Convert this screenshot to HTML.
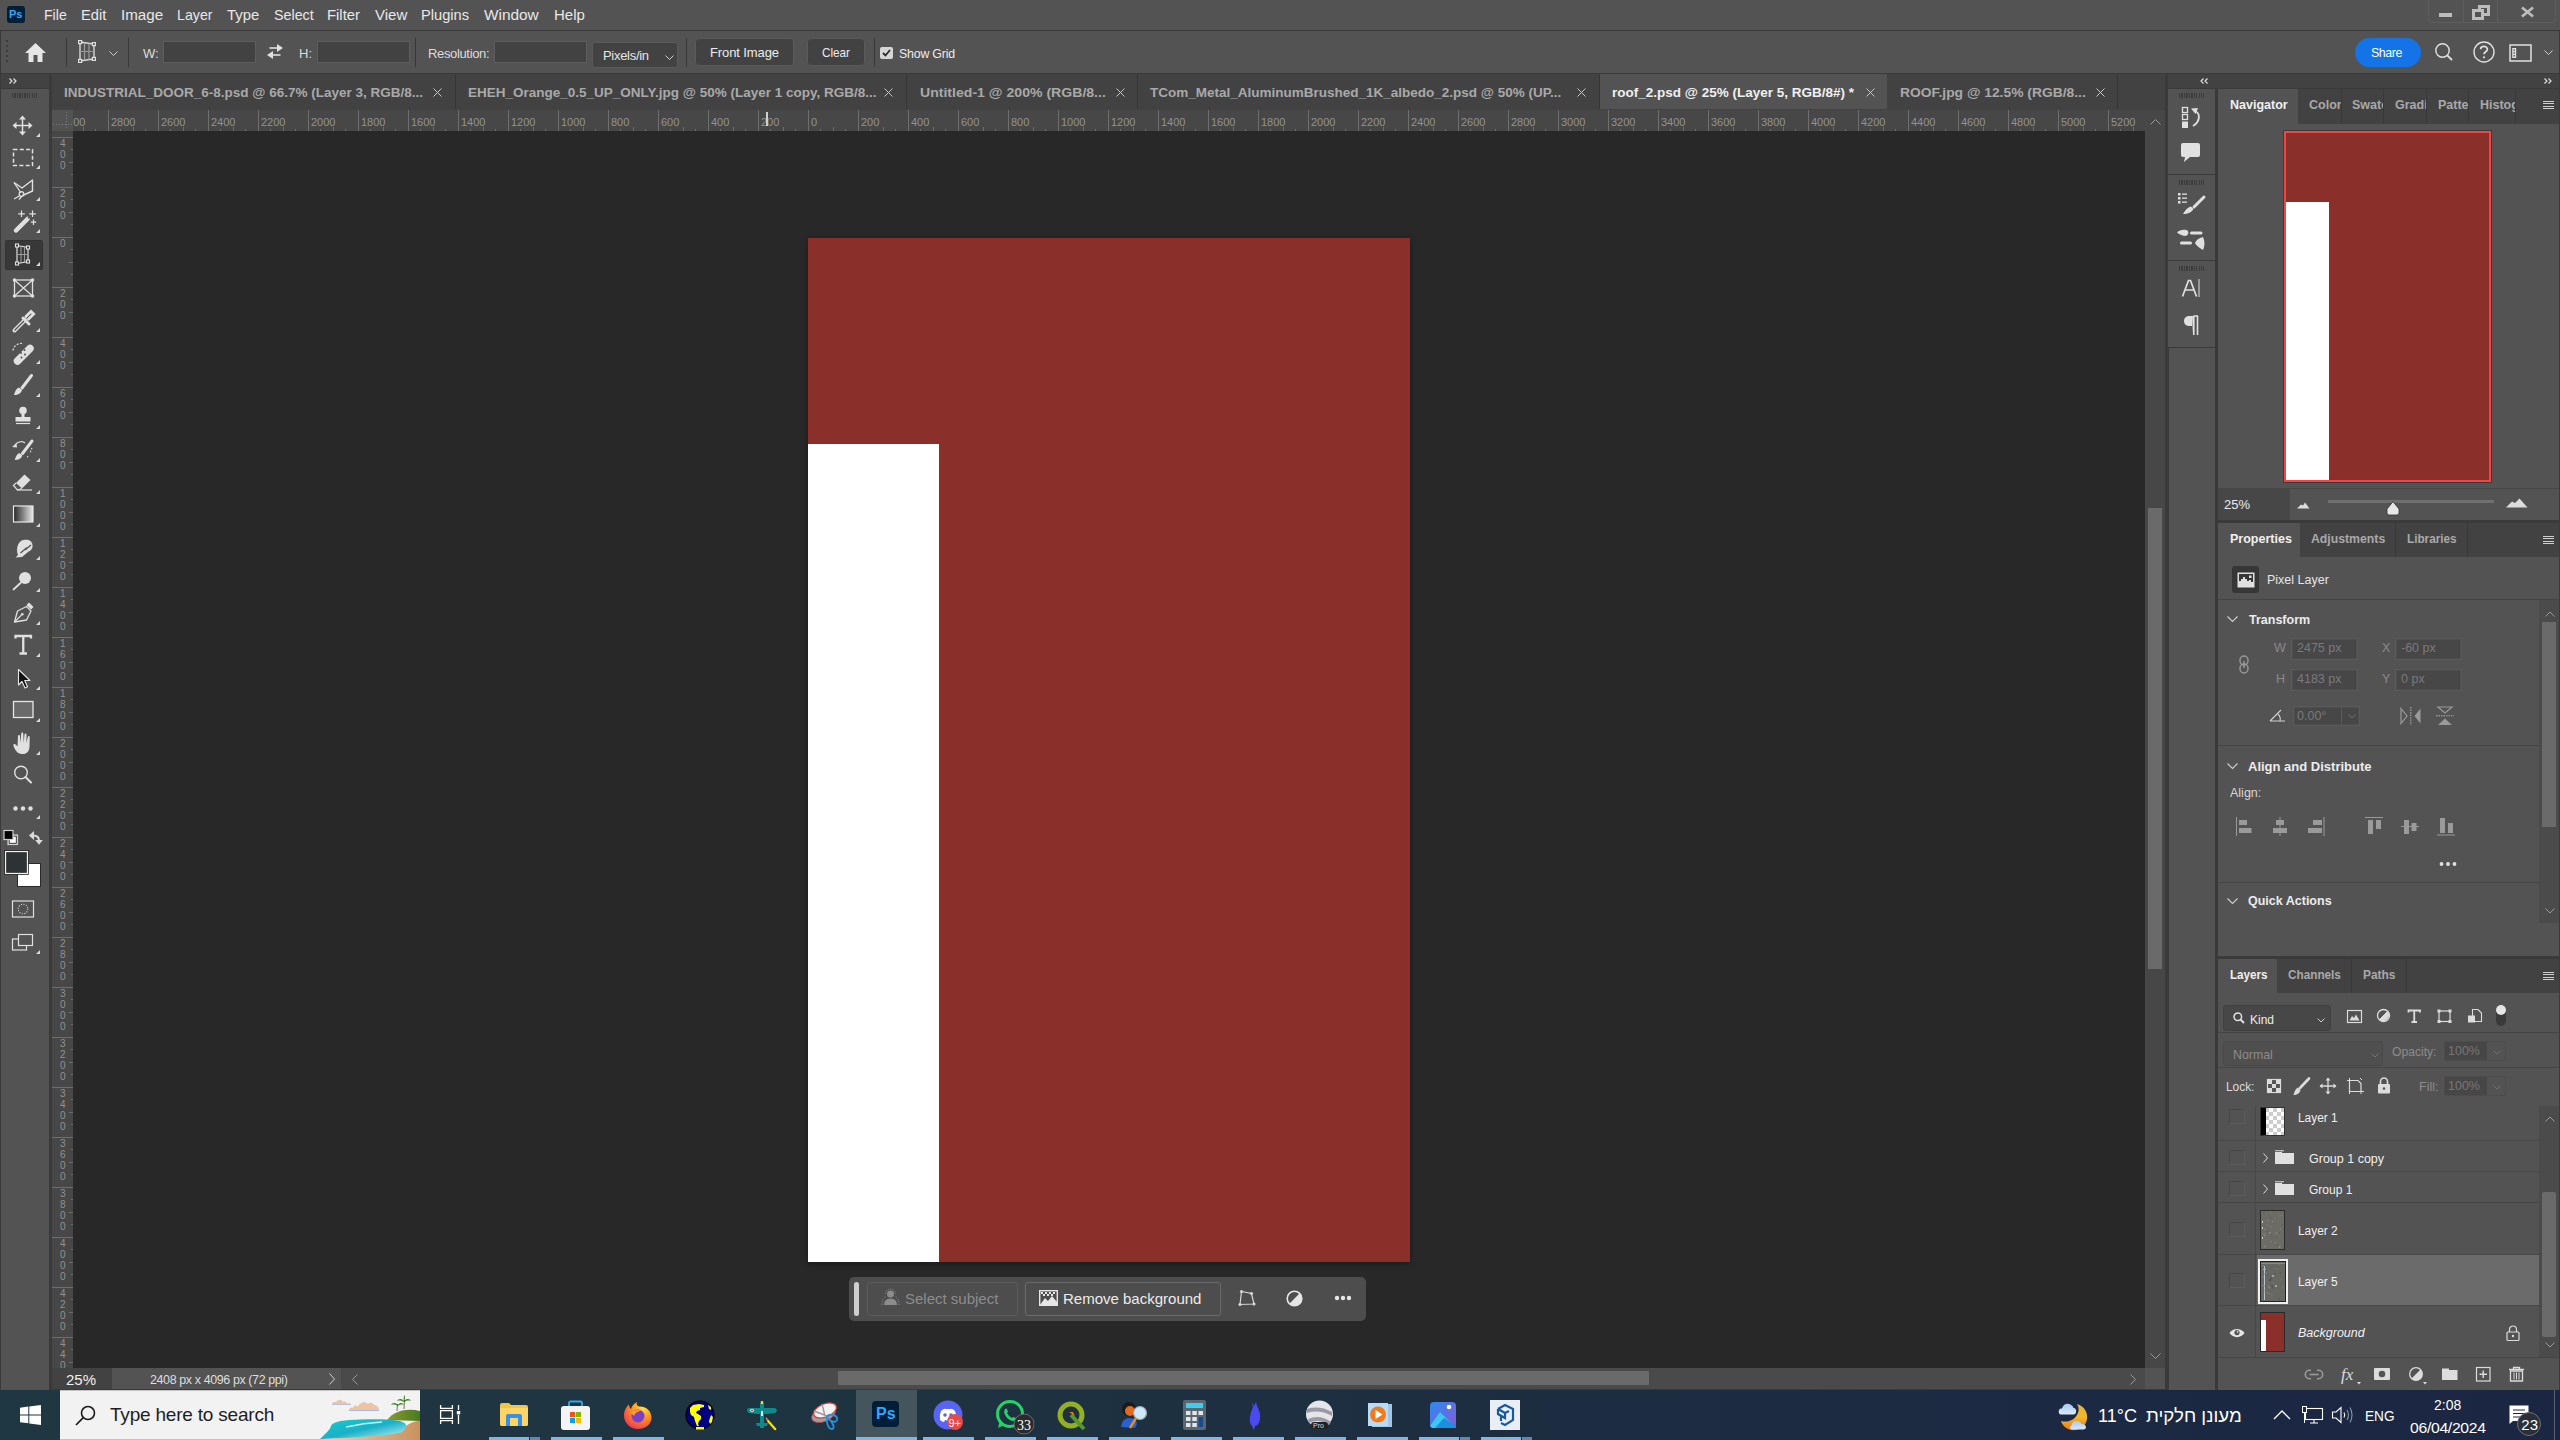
<!DOCTYPE html>
<html><head><meta charset="utf-8"><style>
*{margin:0;padding:0;box-sizing:border-box}
html,body{width:2560px;height:1440px;overflow:hidden;background:#282828;font-family:"Liberation Sans",sans-serif;color:#e6e6e6}
.a{position:absolute}
.t{position:absolute;white-space:nowrap;line-height:1}
svg{position:absolute;overflow:visible}
.tab{top:86px;font-size:13.5px;font-weight:bold;color:#a9a9a9}
.tx{top:87.5px;width:9px;height:9px}
.tx path{stroke:#c8c8c8;stroke-width:1;fill:none}
.rl{position:absolute;font-size:11px;line-height:1;color:#a8a8a8;white-space:nowrap}
.rl{color:#929292}
.rlv{position:absolute;left:8px;font-size:10px;line-height:1;color:#929292}
.grip{width:25px;height:5px;background:repeating-linear-gradient(90deg,#3c3c3c 0 1.3px,transparent 1.3px 2.45px)}
.psep{width:1px;height:35px;background:#383838}
.ptab{font-size:12.5px;font-weight:bold;color:#a9a9a9}
.ptab.act{color:#f0f0f0}
.pmenu{width:11px;height:8px;background:repeating-linear-gradient(#d0d0d0 0 1px,transparent 1px 2.33px)}
.chev path{fill:none;stroke:#cfcfcf;stroke-width:1.1}
.phead{font-size:12.5px;font-weight:bold;color:#ececec}
.plbl{font-size:12.5px;color:#8a8a8a}
.pval{font-size:12.5px;color:#7a7a7a}
.pfield{border:1px solid #5a5a5a;background:#474747;box-shadow:inset 0 0 0 1px #4d4d4d}
.lrow{left:0;width:321px;height:1px;background:#474747}
.ebox{width:16px;height:15px;border:1px solid #474747;border-right-color:#5c5c5c;border-bottom-color:#5c5c5c}
.lname{font-size:12.5px;color:#f0f0f0}
.ul{position:absolute;top:1437px;height:3px;background:#76b9ed}

</style></head><body>
<div class="a" style="left:0;top:0;width:2560px;height:30px;background:#535353"></div>
<div class="a" style="left:0;top:30px;width:2560px;height:1px;background:#393939"></div>
<div class="a" style="left:7px;top:6px;width:18px;height:17px;background:#001e36;border-radius:3px"></div>
<div class="t" style="left:9px;top:9px;font-size:11px;font-weight:bold;color:#31a8ff">Ps</div>
<div class="t" style="left:44px;top:7px;font-size:15px;color:#e8e8e8;transform:scaleX(0.94);transform-origin:left">File</div>
<div class="t" style="left:81px;top:7px;font-size:15px;color:#e8e8e8;transform:scaleX(0.976);transform-origin:left">Edit</div>
<div class="t" style="left:121px;top:7px;font-size:15px;color:#e8e8e8;transform:scaleX(1.01);transform-origin:left">Image</div>
<div class="t" style="left:177px;top:7px;font-size:15px;color:#e8e8e8;transform:scaleX(0.947);transform-origin:left">Layer</div>
<div class="t" style="left:227px;top:7px;font-size:15px;color:#e8e8e8;transform:scaleX(0.99);transform-origin:left">Type</div>
<div class="t" style="left:274px;top:7px;font-size:15px;color:#e8e8e8;transform:scaleX(0.953);transform-origin:left">Select</div>
<div class="t" style="left:327px;top:7px;font-size:15px;color:#e8e8e8;transform:scaleX(0.99);transform-origin:left">Filter</div>
<div class="t" style="left:375px;top:7px;font-size:15px;color:#e8e8e8">View</div>
<div class="t" style="left:421px;top:7px;font-size:15px;color:#e8e8e8;transform:scaleX(0.976);transform-origin:left">Plugins</div>
<div class="t" style="left:484px;top:7px;font-size:15px;color:#e8e8e8;transform:scaleX(1.026);transform-origin:left">Window</div>
<div class="t" style="left:554px;top:7px;font-size:15px;color:#e8e8e8">Help</div>
<!-- window controls -->
<div class="a" style="left:2428px;top:-4px;width:128px;height:27px;border:1px solid #5e5e5e;border-radius:0 0 4px 4px"></div>
<div class="a" style="left:2463px;top:0;width:1px;height:23px;background:#5e5e5e"></div>
<div class="a" style="left:2497px;top:0;width:1px;height:23px;background:#5e5e5e"></div>
<div class="a" style="left:2439px;top:13px;width:13px;height:4px;background:#bdbdbd"></div>
<div class="a" style="left:2478px;top:5px;width:12px;height:11px;border:3px solid #bdbdbd"></div>
<div class="a" style="left:2472px;top:9px;width:12px;height:11px;border:3px solid #bdbdbd;background:#535353"></div>
<svg style="left:2521px;top:7px" width="13" height="10" viewBox="0 0 13 10"><path d="M1 0.5 L12 9.5 M12 0.5 L1 9.5" stroke="#bdbdbd" stroke-width="2.8"/></svg>

<div class="a" style="left:0;top:31px;width:2560px;height:42px;background:#535353;border-left:1px solid #3a3a3a;border-right:1px solid #3a3a3a"></div>
<!-- grip -->
<div class="a" style="left:6px;top:40px;width:2px;height:24px;background:repeating-linear-gradient(#3c3c3c 0 2px,transparent 2px 5px)"></div>
<!-- home -->
<svg style="left:25px;top:43px" width="22" height="20" viewBox="0 0 22 20"><path d="M10.5 0 L21 10 L17.5 10 L17.5 19 L12.5 19 L12.5 12 L8.5 12 L8.5 19 L3.5 19 L3.5 10 L0 10 Z" fill="#e6e6e6"/></svg>
<div class="a" style="left:66px;top:38px;width:1px;height:29px;background:#383838"></div>
<!-- perspective crop tool icon -->
<svg style="left:78px;top:40px" width="18" height="23" viewBox="0 0 18 23"><path d="M2 2 L16 4 L16 19 L2 21 Z" fill="none" stroke="#e0e0e0" stroke-width="1.3"/><path d="M6.5 3 V20 M11 3.5 V19.5 M2 11.5 H16" stroke="#9a9a9a" stroke-width="1.2"/><g fill="#535353" stroke="#e0e0e0" stroke-width="1.2"><rect x="0.6" y="0.6" width="3" height="3"/><rect x="14.4" y="2.6" width="3" height="3"/><rect x="14.4" y="17.4" width="3" height="3"/><rect x="0.6" y="19.4" width="3" height="3"/></g></svg>
<svg style="left:109px;top:51px" width="9" height="5" viewBox="0 0 9 5"><path d="M0.5 0.5 L4.5 4.5 L8.5 0.5" fill="none" stroke="#d0d0d0" stroke-width="1"/></svg>
<div class="a" style="left:128px;top:38px;width:1px;height:29px;background:#383838"></div>
<div class="t" style="left:143px;top:47px;font-size:13px;color:#dcdcdc">W:</div>
<div class="a" style="left:163px;top:41px;width:93px;height:22px;background:#424242;border:1px solid #5e5e5e"></div>
<svg style="left:266px;top:44px" width="18" height="16" viewBox="0 0 18 16"><path d="M3.5 4 H13" stroke="#e0e0e0" stroke-width="1.6"/><path d="M11 0 L17 4 L11 8 Z" fill="#e0e0e0"/><path d="M14.5 11 H5" stroke="#e0e0e0" stroke-width="1.6"/><path d="M7 7 L1 11 L7 15 Z" fill="#e0e0e0"/></svg>
<div class="t" style="left:299px;top:47px;font-size:13px;color:#dcdcdc">H:</div>
<div class="a" style="left:317px;top:41px;width:93px;height:22px;background:#424242;border:1px solid #5e5e5e"></div>
<div class="a" style="left:415px;top:38px;width:1px;height:29px;background:#383838"></div>
<div class="t" style="left:428px;top:47px;font-size:13px;color:#dcdcdc;letter-spacing:-0.35px">Resolution:</div>
<div class="a" style="left:494px;top:41px;width:93px;height:22px;background:#424242;border:1px solid #5e5e5e"></div>
<div class="a" style="left:592px;top:42px;width:86px;height:26px;background:#424242;border:1px solid #5a5a5a;border-radius:3px"></div>
<div class="t" style="left:603px;top:49px;font-size:13px;color:#e6e6e6;letter-spacing:-0.3px">Pixels/in</div>
<svg style="left:665px;top:55px" width="9" height="5" viewBox="0 0 9 5"><path d="M0.5 0.5 L4.5 4.5 L8.5 0.5" fill="none" stroke="#d0d0d0" stroke-width="1"/></svg>
<div class="a" style="left:686px;top:38px;width:1px;height:29px;background:#383838"></div>
<div class="a" style="left:695px;top:38px;width:99px;height:28px;background:#424242;border:1px solid #5a5a5a;border-radius:4px"></div>
<div class="t" style="left:710px;top:46px;font-size:13px;color:#ececec;letter-spacing:-0.1px">Front Image</div>
<div class="a" style="left:807px;top:38px;width:58px;height:28px;background:#424242;border:1px solid #5a5a5a;border-radius:4px"></div>
<div class="t" style="left:822px;top:46px;font-size:13px;color:#ececec;transform:scaleX(0.9);transform-origin:left">Clear</div>
<div class="a" style="left:874px;top:38px;width:1px;height:29px;background:#383838"></div>
<div class="a" style="left:880px;top:47px;width:13px;height:12px;background:#d6d6d6;border-radius:2px"></div>
<svg style="left:882px;top:49px" width="9" height="8" viewBox="0 0 9 8"><path d="M1 4 L3.5 6.5 L8 1" fill="none" stroke="#2a2a2a" stroke-width="1.8"/></svg>
<div class="t" style="left:899px;top:47px;font-size:13px;color:#ececec;letter-spacing:-0.2px;transform:scaleX(0.95);transform-origin:left">Show Grid</div>
<!-- right side -->
<div class="a" style="left:2355px;top:38px;width:66px;height:29px;background:#1473e6;border-radius:15px"></div>
<div class="t" style="left:2371px;top:46px;font-size:13.5px;color:#ffffff;letter-spacing:-0.5px;transform:scaleX(0.92);transform-origin:left">Share</div>
<svg style="left:2435px;top:43px" width="18" height="19" viewBox="0 0 18 19"><circle cx="7.5" cy="7.5" r="6.7" fill="none" stroke="#e0e0e0" stroke-width="1.4"/><path d="M12.3 12.3 L17 17" stroke="#e0e0e0" stroke-width="1.8"/></svg>
<svg style="left:2473px;top:41px" width="22" height="22" viewBox="0 0 22 22"><circle cx="11" cy="11" r="10" fill="none" stroke="#e0e0e0" stroke-width="1.4"/><path d="M7.6 8.3 C7.6 4.5 14.4 4.5 14.4 8.3 C14.4 10.8 11 10.8 11 13.3" fill="none" stroke="#e0e0e0" stroke-width="1.7"/><circle cx="11" cy="16.3" r="1.1" fill="#e0e0e0"/></svg>
<svg style="left:2509px;top:44px" width="23" height="18" viewBox="0 0 23 18"><rect x="1" y="1" width="21" height="16" fill="none" stroke="#e0e0e0" stroke-width="1.5"/><rect x="3.2" y="4" width="4" height="10" fill="#e0e0e0"/><g fill="#535353"><rect x="4.5" y="5.5" width="1.4" height="1.4"/><rect x="4.5" y="8.3" width="1.4" height="1.4"/><rect x="4.5" y="11.1" width="1.4" height="1.4"/></g></svg>
<svg style="left:2544px;top:50px" width="9" height="5" viewBox="0 0 9 5"><path d="M0.5 0.5 L4.5 4.5 L8.5 0.5" fill="none" stroke="#d0d0d0" stroke-width="1"/></svg>

<div class="a" style="left:0;top:73px;width:2560px;height:1317px;background:#3a3a3a"></div>
<div class="a" style="left:52px;top:74px;width:2113px;height:36px;background:#424242"></div>
<div class="a" style="left:1600px;top:74px;width:287px;height:35px;background:#535353"></div>
<div class="a" style="left:455px;top:74px;width:1px;height:35px;background:#363636"></div>
<div class="a" style="left:906px;top:74px;width:1px;height:35px;background:#363636"></div>
<div class="a" style="left:1137px;top:74px;width:1px;height:35px;background:#363636"></div>
<div class="a" style="left:1599px;top:74px;width:1px;height:35px;background:#363636"></div>
<div class="a" style="left:2117px;top:74px;width:1px;height:35px;background:#363636"></div>
<div class="t tab" style="left:64px">INDUSTRIAL_DOOR_6-8.psd @ 66.7% (Layer 3, RGB/8...</div>
<div class="t tab" style="left:468px">EHEH_Orange_0.5_UP_ONLY.jpg @ 50% (Layer 1 copy, RGB/8...</div>
<div class="t tab" style="left:920px;transform:scaleX(1.043);transform-origin:left">Untitled-1 @ 200% (RGB/8...</div>
<div class="t tab" style="left:1150px">TCom_Metal_AluminumBrushed_1K_albedo_2.psd @ 50% (UP...</div>
<div class="t tab" style="left:1612px;color:#f0f0f0">roof_2.psd @ 25% (Layer 5, RGB/8#) *</div>
<div class="t tab" style="left:1900px;transform:scaleX(1.025);transform-origin:left">ROOF.jpg @ 12.5% (RGB/8...</div>
<svg class="tx" style="left:433.2px"><path d="M0.5 0.5 L8.5 8.5 M8.5 0.5 L0.5 8.5"/></svg>
<svg class="tx" style="left:884.3px"><path d="M0.5 0.5 L8.5 8.5 M8.5 0.5 L0.5 8.5"/></svg>
<svg class="tx" style="left:1115.5px"><path d="M0.5 0.5 L8.5 8.5 M8.5 0.5 L0.5 8.5"/></svg>
<svg class="tx" style="left:1576.5px"><path d="M0.5 0.5 L8.5 8.5 M8.5 0.5 L0.5 8.5"/></svg>
<svg class="tx" style="left:1865.5px"><path d="M0.5 0.5 L8.5 8.5 M8.5 0.5 L0.5 8.5"/></svg>
<svg class="tx" style="left:2095.5px"><path d="M0.5 0.5 L8.5 8.5 M8.5 0.5 L0.5 8.5"/></svg>

<div class="a" style="left:52px;top:110px;width:2093px;height:21px;background:#474747"></div>
<div class="a" style="left:52px;top:110px;width:21px;height:21px;background:#535353"></div>
<div class="a" style="left:52px;top:131px;width:21px;height:1237px;background:#474747"></div>
<div class="a" style="left:73px;top:110px;width:2072px;height:21px;overflow:hidden">
<svg style="left:0;top:0" width="2072" height="21" viewBox="0 0 2072 21"><path d="M10.5 17 V21 M22.5 19 V21 M35.5 0 V21 M47.5 19 V21 M60.5 17 V21 M72.5 19 V21 M85.5 0 V21 M97.5 19 V21 M110.5 17 V21 M122.5 19 V21 M135.5 0 V21 M147.5 19 V21 M160.5 17 V21 M172.5 19 V21 M185.5 0 V21 M197.5 19 V21 M210.5 17 V21 M222.5 19 V21 M235.5 0 V21 M247.5 19 V21 M260.5 17 V21 M272.5 19 V21 M285.5 0 V21 M297.5 19 V21 M310.5 17 V21 M322.5 19 V21 M335.5 0 V21 M347.5 19 V21 M360.5 17 V21 M372.5 19 V21 M385.5 0 V21 M397.5 19 V21 M410.5 17 V21 M422.5 19 V21 M435.5 0 V21 M447.5 19 V21 M460.5 17 V21 M472.5 19 V21 M485.5 0 V21 M497.5 19 V21 M510.5 17 V21 M522.5 19 V21 M535.5 0 V21 M547.5 19 V21 M560.5 17 V21 M572.5 19 V21 M585.5 0 V21 M597.5 19 V21 M610.5 17 V21 M622.5 19 V21 M635.5 0 V21 M647.5 19 V21 M660.5 17 V21 M672.5 19 V21 M685.5 0 V21 M697.5 19 V21 M710.5 17 V21 M722.5 19 V21 M735.5 0 V21 M747.5 19 V21 M760.5 17 V21 M772.5 19 V21 M785.5 0 V21 M797.5 19 V21 M810.5 17 V21 M822.5 19 V21 M835.5 0 V21 M847.5 19 V21 M860.5 17 V21 M872.5 19 V21 M885.5 0 V21 M897.5 19 V21 M910.5 17 V21 M922.5 19 V21 M935.5 0 V21 M947.5 19 V21 M960.5 17 V21 M972.5 19 V21 M985.5 0 V21 M997.5 19 V21 M1010.5 17 V21 M1022.5 19 V21 M1035.5 0 V21 M1047.5 19 V21 M1060.5 17 V21 M1072.5 19 V21 M1085.5 0 V21 M1097.5 19 V21 M1110.5 17 V21 M1122.5 19 V21 M1135.5 0 V21 M1147.5 19 V21 M1160.5 17 V21 M1172.5 19 V21 M1185.5 0 V21 M1197.5 19 V21 M1210.5 17 V21 M1222.5 19 V21 M1235.5 0 V21 M1247.5 19 V21 M1260.5 17 V21 M1272.5 19 V21 M1285.5 0 V21 M1297.5 19 V21 M1310.5 17 V21 M1322.5 19 V21 M1335.5 0 V21 M1347.5 19 V21 M1360.5 17 V21 M1372.5 19 V21 M1385.5 0 V21 M1397.5 19 V21 M1410.5 17 V21 M1422.5 19 V21 M1435.5 0 V21 M1447.5 19 V21 M1460.5 17 V21 M1472.5 19 V21 M1485.5 0 V21 M1497.5 19 V21 M1510.5 17 V21 M1522.5 19 V21 M1535.5 0 V21 M1547.5 19 V21 M1560.5 17 V21 M1572.5 19 V21 M1585.5 0 V21 M1597.5 19 V21 M1610.5 17 V21 M1622.5 19 V21 M1635.5 0 V21 M1647.5 19 V21 M1660.5 17 V21 M1672.5 19 V21 M1685.5 0 V21 M1697.5 19 V21 M1710.5 17 V21 M1722.5 19 V21 M1735.5 0 V21 M1747.5 19 V21 M1760.5 17 V21 M1772.5 19 V21 M1785.5 0 V21 M1797.5 19 V21 M1810.5 17 V21 M1822.5 19 V21 M1835.5 0 V21 M1847.5 19 V21 M1860.5 17 V21 M1872.5 19 V21 M1885.5 0 V21 M1897.5 19 V21 M1910.5 17 V21 M1922.5 19 V21 M1935.5 0 V21 M1947.5 19 V21 M1960.5 17 V21 M1972.5 19 V21 M1985.5 0 V21 M1997.5 19 V21 M2010.5 17 V21 M2022.5 19 V21 M2035.5 0 V21 M2047.5 19 V21 M2060.5 17 V21" stroke="#6e6e6e" stroke-width="1" fill="none"/></svg>
<div class="rl" style="left:-12px;top:7px">3000</div>
<div class="rl" style="left:38px;top:7px">2800</div>
<div class="rl" style="left:88px;top:7px">2600</div>
<div class="rl" style="left:138px;top:7px">2400</div>
<div class="rl" style="left:188px;top:7px">2200</div>
<div class="rl" style="left:238px;top:7px">2000</div>
<div class="rl" style="left:288px;top:7px">1800</div>
<div class="rl" style="left:338px;top:7px">1600</div>
<div class="rl" style="left:388px;top:7px">1400</div>
<div class="rl" style="left:438px;top:7px">1200</div>
<div class="rl" style="left:488px;top:7px">1000</div>
<div class="rl" style="left:538px;top:7px">800</div>
<div class="rl" style="left:588px;top:7px">600</div>
<div class="rl" style="left:638px;top:7px">400</div>
<div class="rl" style="left:688px;top:7px">200</div>
<div class="rl" style="left:738px;top:7px">0</div>
<div class="rl" style="left:788px;top:7px">200</div>
<div class="rl" style="left:838px;top:7px">400</div>
<div class="rl" style="left:888px;top:7px">600</div>
<div class="rl" style="left:938px;top:7px">800</div>
<div class="rl" style="left:988px;top:7px">1000</div>
<div class="rl" style="left:1038px;top:7px">1200</div>
<div class="rl" style="left:1088px;top:7px">1400</div>
<div class="rl" style="left:1138px;top:7px">1600</div>
<div class="rl" style="left:1188px;top:7px">1800</div>
<div class="rl" style="left:1238px;top:7px">2000</div>
<div class="rl" style="left:1288px;top:7px">2200</div>
<div class="rl" style="left:1338px;top:7px">2400</div>
<div class="rl" style="left:1388px;top:7px">2600</div>
<div class="rl" style="left:1438px;top:7px">2800</div>
<div class="rl" style="left:1488px;top:7px">3000</div>
<div class="rl" style="left:1538px;top:7px">3200</div>
<div class="rl" style="left:1588px;top:7px">3400</div>
<div class="rl" style="left:1638px;top:7px">3600</div>
<div class="rl" style="left:1688px;top:7px">3800</div>
<div class="rl" style="left:1738px;top:7px">4000</div>
<div class="rl" style="left:1788px;top:7px">4200</div>
<div class="rl" style="left:1838px;top:7px">4400</div>
<div class="rl" style="left:1888px;top:7px">4600</div>
<div class="rl" style="left:1938px;top:7px">4800</div>
<div class="rl" style="left:1988px;top:7px">5000</div>
<div class="rl" style="left:2038px;top:7px">5200</div>
</div>
<div class="a" style="left:52px;top:131px;width:21px;height:1237px;overflow:hidden">
<svg style="left:0;top:0" width="21" height="1237" viewBox="0 0 21 1237"><path d="M0 6.5 H21 M19 18.5 H21 M17 31.5 H21 M19 43.5 H21 M0 56.5 H21 M19 68.5 H21 M17 81.5 H21 M19 93.5 H21 M0 106.5 H21 M19 118.5 H21 M17 131.5 H21 M19 143.5 H21 M0 156.5 H21 M19 168.5 H21 M17 181.5 H21 M19 193.5 H21 M0 206.5 H21 M19 218.5 H21 M17 231.5 H21 M19 243.5 H21 M0 256.5 H21 M19 268.5 H21 M17 281.5 H21 M19 293.5 H21 M0 306.5 H21 M19 318.5 H21 M17 331.5 H21 M19 343.5 H21 M0 356.5 H21 M19 368.5 H21 M17 381.5 H21 M19 393.5 H21 M0 406.5 H21 M19 418.5 H21 M17 431.5 H21 M19 443.5 H21 M0 456.5 H21 M19 468.5 H21 M17 481.5 H21 M19 493.5 H21 M0 506.5 H21 M19 518.5 H21 M17 531.5 H21 M19 543.5 H21 M0 556.5 H21 M19 568.5 H21 M17 581.5 H21 M19 593.5 H21 M0 606.5 H21 M19 618.5 H21 M17 631.5 H21 M19 643.5 H21 M0 656.5 H21 M19 668.5 H21 M17 681.5 H21 M19 693.5 H21 M0 706.5 H21 M19 718.5 H21 M17 731.5 H21 M19 743.5 H21 M0 756.5 H21 M19 768.5 H21 M17 781.5 H21 M19 793.5 H21 M0 806.5 H21 M19 818.5 H21 M17 831.5 H21 M19 843.5 H21 M0 856.5 H21 M19 868.5 H21 M17 881.5 H21 M19 893.5 H21 M0 906.5 H21 M19 918.5 H21 M17 931.5 H21 M19 943.5 H21 M0 956.5 H21 M19 968.5 H21 M17 981.5 H21 M19 993.5 H21 M0 1006.5 H21 M19 1018.5 H21 M17 1031.5 H21 M19 1043.5 H21 M0 1056.5 H21 M19 1068.5 H21 M17 1081.5 H21 M19 1093.5 H21 M0 1106.5 H21 M19 1118.5 H21 M17 1131.5 H21 M19 1143.5 H21 M0 1156.5 H21 M19 1168.5 H21 M17 1181.5 H21 M19 1193.5 H21 M0 1206.5 H21 M19 1218.5 H21 M17 1231.5 H21" stroke="#6e6e6e" stroke-width="1" fill="none"/></svg>
<div class="rlv" style="top:8px">4</div>
<div class="rlv" style="top:19px">0</div>
<div class="rlv" style="top:30px">0</div>
<div class="rlv" style="top:58px">2</div>
<div class="rlv" style="top:69px">0</div>
<div class="rlv" style="top:80px">0</div>
<div class="rlv" style="top:108px">0</div>
<div class="rlv" style="top:158px">2</div>
<div class="rlv" style="top:169px">0</div>
<div class="rlv" style="top:180px">0</div>
<div class="rlv" style="top:208px">4</div>
<div class="rlv" style="top:219px">0</div>
<div class="rlv" style="top:230px">0</div>
<div class="rlv" style="top:258px">6</div>
<div class="rlv" style="top:269px">0</div>
<div class="rlv" style="top:280px">0</div>
<div class="rlv" style="top:308px">8</div>
<div class="rlv" style="top:319px">0</div>
<div class="rlv" style="top:330px">0</div>
<div class="rlv" style="top:358px">1</div>
<div class="rlv" style="top:369px">0</div>
<div class="rlv" style="top:380px">0</div>
<div class="rlv" style="top:391px">0</div>
<div class="rlv" style="top:408px">1</div>
<div class="rlv" style="top:419px">2</div>
<div class="rlv" style="top:430px">0</div>
<div class="rlv" style="top:441px">0</div>
<div class="rlv" style="top:458px">1</div>
<div class="rlv" style="top:469px">4</div>
<div class="rlv" style="top:480px">0</div>
<div class="rlv" style="top:491px">0</div>
<div class="rlv" style="top:508px">1</div>
<div class="rlv" style="top:519px">6</div>
<div class="rlv" style="top:530px">0</div>
<div class="rlv" style="top:541px">0</div>
<div class="rlv" style="top:558px">1</div>
<div class="rlv" style="top:569px">8</div>
<div class="rlv" style="top:580px">0</div>
<div class="rlv" style="top:591px">0</div>
<div class="rlv" style="top:608px">2</div>
<div class="rlv" style="top:619px">0</div>
<div class="rlv" style="top:630px">0</div>
<div class="rlv" style="top:641px">0</div>
<div class="rlv" style="top:658px">2</div>
<div class="rlv" style="top:669px">2</div>
<div class="rlv" style="top:680px">0</div>
<div class="rlv" style="top:691px">0</div>
<div class="rlv" style="top:708px">2</div>
<div class="rlv" style="top:719px">4</div>
<div class="rlv" style="top:730px">0</div>
<div class="rlv" style="top:741px">0</div>
<div class="rlv" style="top:758px">2</div>
<div class="rlv" style="top:769px">6</div>
<div class="rlv" style="top:780px">0</div>
<div class="rlv" style="top:791px">0</div>
<div class="rlv" style="top:808px">2</div>
<div class="rlv" style="top:819px">8</div>
<div class="rlv" style="top:830px">0</div>
<div class="rlv" style="top:841px">0</div>
<div class="rlv" style="top:858px">3</div>
<div class="rlv" style="top:869px">0</div>
<div class="rlv" style="top:880px">0</div>
<div class="rlv" style="top:891px">0</div>
<div class="rlv" style="top:908px">3</div>
<div class="rlv" style="top:919px">2</div>
<div class="rlv" style="top:930px">0</div>
<div class="rlv" style="top:941px">0</div>
<div class="rlv" style="top:958px">3</div>
<div class="rlv" style="top:969px">4</div>
<div class="rlv" style="top:980px">0</div>
<div class="rlv" style="top:991px">0</div>
<div class="rlv" style="top:1008px">3</div>
<div class="rlv" style="top:1019px">6</div>
<div class="rlv" style="top:1030px">0</div>
<div class="rlv" style="top:1041px">0</div>
<div class="rlv" style="top:1058px">3</div>
<div class="rlv" style="top:1069px">8</div>
<div class="rlv" style="top:1080px">0</div>
<div class="rlv" style="top:1091px">0</div>
<div class="rlv" style="top:1108px">4</div>
<div class="rlv" style="top:1119px">0</div>
<div class="rlv" style="top:1130px">0</div>
<div class="rlv" style="top:1141px">0</div>
<div class="rlv" style="top:1158px">4</div>
<div class="rlv" style="top:1169px">2</div>
<div class="rlv" style="top:1180px">0</div>
<div class="rlv" style="top:1191px">0</div>
<div class="rlv" style="top:1208px">4</div>
<div class="rlv" style="top:1219px">4</div>
<div class="rlv" style="top:1230px">0</div>
</div>
<div class="a" style="left:53px;top:124px;width:19px;height:1px;background:repeating-linear-gradient(90deg,#7a7a7a 0 1px,transparent 1px 3px)"></div>
<div class="a" style="left:66px;top:112px;width:1px;height:17px;background:repeating-linear-gradient(#7a7a7a 0 1px,transparent 1px 3px)"></div>
<div class="a" style="left:766px;top:112px;width:2px;height:14px;background:#d0d0d0"></div>
<!-- canvas -->
<div class="a" style="left:73px;top:131px;width:2072px;height:1237px;background:#282828"></div>
<div class="a" style="left:808px;top:238px;width:602px;height:1024px;background:#8b2f2a;box-shadow:0 2px 6px rgba(0,0,0,0.35)"></div>
<div class="a" style="left:808px;top:444px;width:131px;height:818px;background:#ffffff"></div>
<!-- v scrollbar -->
<div class="a" style="left:2145px;top:110px;width:20px;height:1258px;background:#474747"></div>
<div class="a" style="left:2148px;top:508px;width:14px;height:461px;background:#6a6a6a"></div>
<svg style="left:2150px;top:119px" width="11" height="6" viewBox="0 0 11 6"><path d="M0.5 5.5 L5.5 0.5 L10.5 5.5" fill="none" stroke="#9a9a9a" stroke-width="1"/></svg>
<svg style="left:2150px;top:1353px" width="11" height="6" viewBox="0 0 11 6"><path d="M0.5 0.5 L5.5 5.5 L10.5 0.5" fill="none" stroke="#9a9a9a" stroke-width="1"/></svg>
<!-- contextual task bar -->
<div class="a" style="left:849px;top:1277px;width:517px;height:44px;background:#4d4d4d;border-radius:5px"></div>
<div class="a" style="left:854px;top:1282px;width:5px;height:34px;background:#cfcfcf;border-radius:3px"></div>
<div class="a" style="left:867px;top:1282px;width:151px;height:34px;border:1px solid #5c5c5c;border-radius:3px"></div>
<div class="a" style="left:1025px;top:1282px;width:196px;height:34px;border:1px solid #6a6a6a;border-radius:3px"></div>
<div class="t" style="left:905px;top:1291px;font-size:15px;color:#8c8c8c">Select subject</div>
<div class="t" style="left:1063px;top:1291px;font-size:15px;color:#ececec">Remove background</div>
<svg style="left:881px;top:1289px" width="19" height="17" viewBox="0 0 19 17"><circle cx="9.5" cy="5" r="3.5" fill="#8c8c8c"/><path d="M3 16 Q3 9.5 9.5 9.5 Q16 9.5 16 16Z" fill="#8c8c8c"/><path d="M4.5 5 A5 5 0 0 1 14.5 5 M1 16 Q1 9 5 7.5 M18 16 Q18 9 14 7.5" fill="none" stroke="#8c8c8c" stroke-width="1" stroke-dasharray="1.2 1.2"/></svg>
<svg style="left:1039px;top:1290px" width="19" height="16" viewBox="0 0 19 16"><rect x="0.7" y="0.7" width="17.6" height="14.6" fill="none" stroke="#e6e6e6" stroke-width="1.4"/><path d="M1 15 L6 8 L9 11 L13 6 L18 12 V15Z" fill="#e6e6e6"/><g fill="#e6e6e6"><rect x="2" y="2" width="2" height="2"/><rect x="6" y="2" width="2" height="2"/><rect x="10" y="2" width="2" height="2"/><rect x="14" y="2" width="2" height="2"/><rect x="4" y="4" width="2" height="2"/><rect x="8" y="4" width="2" height="2"/><rect x="12" y="4" width="2" height="2"/></g></svg>
<svg style="left:1238px;top:1289px" width="18" height="18" viewBox="0 0 18 18"><path d="M3.5 2.5 L13.5 4.5 L16 15 L2 15.5 Z" fill="none" stroke="#d6d6d6" stroke-width="1.2"/><g fill="#d6d6d6"><circle cx="3.5" cy="2.5" r="1.6"/><circle cx="13.5" cy="4.5" r="1.6"/><circle cx="16" cy="15" r="1.6"/><circle cx="2" cy="15.5" r="1.6"/></g></svg>
<svg style="left:1286px;top:1290px" width="17" height="17" viewBox="0 0 17 17"><circle cx="8.5" cy="8.5" r="7.3" fill="none" stroke="#e6e6e6" stroke-width="1.6"/><path d="M13.7 3.3 A7.3 7.3 0 0 1 3.3 13.7Z" fill="#e6e6e6"/></svg>
<svg style="left:1334px;top:1295px" width="18" height="6" viewBox="0 0 18 6" fill="#e6e6e6"><circle cx="3" cy="3" r="2.2"/><circle cx="9" cy="3" r="2.2"/><circle cx="15" cy="3" r="2.2"/></svg>

<div class="a" style="left:52px;top:1368px;width:2113px;height:21px;background:#4a4a4a"></div>
<div class="a" style="left:52px;top:1368px;width:60px;height:21px;background:#424242"></div>
<div class="a" style="left:112px;top:1368px;width:229px;height:21px;background:#535353"></div>
<div class="t" style="left:66px;top:1372px;font-size:15px;color:#f0f0f0">25%</div>
<div class="t" style="left:150px;top:1373px;font-size:13px;color:#dedede;letter-spacing:-0.4px;transform:scaleX(0.958);transform-origin:left">2408 px x 4096 px (72 ppi)</div>
<svg style="left:329px;top:1373px" width="6" height="12" viewBox="0 0 6 12"><path d="M0.5 0.5 L5.5 6 L0.5 11.5" fill="none" stroke="#cfcfcf" stroke-width="1"/></svg>
<svg style="left:352px;top:1374px" width="6" height="11" viewBox="0 0 6 11"><path d="M5.5 0.5 L0.5 5.5 L5.5 10.5" fill="none" stroke="#9a9a9a" stroke-width="1"/></svg>
<div class="a" style="left:838px;top:1371px;width:811px;height:14px;background:#6a6a6a;border-radius:1px"></div>
<svg style="left:2130px;top:1374px" width="6" height="11" viewBox="0 0 6 11"><path d="M0.5 0.5 L5.5 5.5 L0.5 10.5" fill="none" stroke="#9a9a9a" stroke-width="1"/></svg>
<div class="a" style="left:2145px;top:1368px;width:20px;height:21px;background:#535353"></div>

<!-- toolbar -->
<div class="a" style="left:1px;top:74px;width:48px;height:14px;background:#424242"></div>
<svg style="left:9px;top:78px" width="8" height="6" viewBox="0 0 8 6"><path d="M0.5 0.5 L3 3 L0.5 5.5 M4.5 0.5 L7 3 L4.5 5.5" fill="none" stroke="#e0e0e0" stroke-width="1.2"/></svg>
<div class="a" style="left:1px;top:89px;width:48px;height:1301px;background:#535353"></div>
<div class="a grip" style="left:12px;top:93px;width:25px"></div>
<div class="a" style="left:5px;top:240px;width:38px;height:30px;background:#383838;border:1px solid #333;border-radius:2px"></div>
<svg style="left:0;top:0" width="50" height="1000" viewBox="0 0 50 1000">
<g fill="#d8d8d8">
<path d="M36 137 L40 137 L40 133Z M36 169 L40 169 L40 165Z M36 201 L40 201 L40 197Z M36 233 L40 233 L40 229Z M36 266 L40 266 L40 262Z M36 332 L40 332 L40 328Z M36 364 L40 364 L40 360Z M36 397 L40 397 L40 393Z M36 429 L40 429 L40 425Z M36 462 L40 462 L40 458Z M36 494 L40 494 L40 490Z M36 527 L40 527 L40 523Z M36 560 L40 560 L40 556Z M36 592 L40 592 L40 588Z M36 625 L40 625 L40 621Z M36 657 L40 657 L40 653Z M36 690 L40 690 L40 686Z M36 722 L40 722 L40 718Z M36 755 L40 755 L40 751Z M36 819 L40 819 L40 815Z M36 954 L40 954 L40 950Z"/>
</g>
<g fill="none" stroke="#e0e0e0" stroke-width="1.5" stroke-linecap="round" stroke-linejoin="round">
<!-- move -->
<path d="M14.5 125.5 H30.5 M22.5 117.5 V133.5"/>
</g>
<g fill="#e0e0e0">
<path d="M22.5 115.5 L19 119.5 L26 119.5Z M22.5 135.5 L19 131.5 L26 131.5Z M12.5 125.5 L16.5 122 L16.5 129Z M32.5 125.5 L28.5 122 L28.5 129Z"/>
</g>
<!-- marquee -->
<rect x="13.5" y="149.5" width="19" height="16" fill="none" stroke="#e0e0e0" stroke-width="1.5" stroke-dasharray="4 2.3"/>
<!-- lasso -->
<path d="M14 182.5 L22 188 L32.5 180 L32.5 191 L22.5 195.5" fill="none" stroke="#e0e0e0" stroke-width="1.4" stroke-linejoin="round"/>
<path d="M14 182.5 L21 193 M14 199 L20 195.5 M19 199.5 L22 196" fill="none" stroke="#e0e0e0" stroke-width="1.3"/>
<circle cx="21.5" cy="194" r="2.3" fill="none" stroke="#e0e0e0" stroke-width="1.3"/>
<!-- magic wand -->
<path d="M16 230.5 L27.5 219" stroke="#e0e0e0" stroke-width="4.5" stroke-linecap="round"/>
<path d="M28 218.5 L29.5 217" stroke="#535353" stroke-width="1.2"/>
<path d="M21.5 210.5 V217 M18.2 213.8 H24.8 M32.5 210.5 V217 M29.2 213.8 H35.8 M33.5 219.5 V225 M30.8 222.2 H36.2" stroke="#e0e0e0" stroke-width="1.2"/>
<!-- perspective crop -->
<g transform="translate(14,243)"><path d="M3 2.5 L14 4.5 L14 18.5 L3 20.5 Z" fill="none" stroke="#e0e0e0" stroke-width="1.2"/><path d="M7 3.5 V19.5 M10.5 4 V19 M3 11.5 H14" stroke="#9a9a9a" stroke-width="1.1"/><g fill="#383838" stroke="#e0e0e0" stroke-width="1.1"><rect x="1.5" y="1" width="3" height="3"/><rect x="12.5" y="3" width="3" height="3"/><rect x="12.5" y="17" width="3" height="3"/><rect x="1.5" y="19" width="3" height="3"/></g></g>
<!-- frame -->
<g fill="none" stroke="#e0e0e0" stroke-width="1.3"><rect x="14.5" y="280" width="18" height="16"/><path d="M14.5 280 L32.5 296 M32.5 280 L14.5 296"/></g>
<g fill="#e0e0e0"><circle cx="14.5" cy="280" r="1.8"/><circle cx="32.5" cy="280" r="1.8"/><circle cx="14.5" cy="296" r="1.8"/><circle cx="32.5" cy="296" r="1.8"/></g>
<!-- eyedropper -->
<path d="M14.5 330.5 L25 320" stroke="#e0e0e0" stroke-width="4" stroke-linecap="round"/>
<path d="M15 330 L24.5 320.5" stroke="#535353" stroke-width="1.4" stroke-linecap="round"/>
<path d="M23 318 L29 324 M26 316.5 L31 311.5 L33.5 314 L28.5 319" stroke="#e0e0e0" stroke-width="3" stroke-linecap="round"/>
<!-- healing -->
<path d="M17.5 361 L30 348.5" stroke="#e0e0e0" stroke-width="7.5" stroke-linecap="round"/>
<g fill="#535353"><circle cx="21" cy="353" r="1"/><circle cx="24.5" cy="350" r="1"/><circle cx="21.5" cy="357.5" r="1"/><circle cx="25" cy="354.5" r="1"/></g>
<path d="M22 343.5 A8 8 0 0 0 13 352" fill="none" stroke="#e0e0e0" stroke-width="1.2" stroke-dasharray="2 1.5"/>
<!-- brush -->
<path d="M21 380 L31.5 376.5" stroke="none"/>
<path d="M31.5 375.5 L22 388" stroke="#e0e0e0" stroke-width="3" stroke-linecap="round"/>
<path d="M19 387.5 C16 388.5 15 392 14 395 C18 395 21.5 393 22 390 Z" fill="#e0e0e0"/>
<!-- stamp -->
<circle cx="23" cy="410.5" r="3.8" fill="#e0e0e0"/>
<path d="M21.5 413 H24.5 V417 H21.5Z M15.5 417 H30.5 V421.5 H15.5Z" fill="#e0e0e0"/>
<path d="M16 423.5 H30" stroke="#e0e0e0" stroke-width="1.2"/>
<!-- history brush -->
<path d="M32 441 L22.5 453.5" stroke="#e0e0e0" stroke-width="3" stroke-linecap="round"/>
<path d="M19.5 453 C16.5 454 15.5 457.5 14.8 460 C18.5 460 21.5 458.5 22.3 455.5 Z" fill="#e0e0e0"/>
<path d="M12 447 L16.5 443 L17 447.5Z" fill="#e0e0e0"/>
<path d="M15 445 C18 441 23 441 25 443" fill="none" stroke="#e0e0e0" stroke-width="1.2"/>
<path d="M32 448 L30 453 M28 456 L27 458" fill="none" stroke="#e0e0e0" stroke-width="1.1" stroke-dasharray="1.5 1.5"/>
<!-- eraser -->
<path d="M24.5 474.5 L30.5 480 L22 488.5 L16 483 Z" fill="#e0e0e0"/>
<path d="M16 483 L13.5 485.5 L17.5 490 L22 488.5" fill="none" stroke="#e0e0e0" stroke-width="1.2"/>
<path d="M17.5 490 H32" stroke="#e0e0e0" stroke-width="1.2"/>
<!-- gradient -->
<defs><linearGradient id="gr" x1="0" x2="1"><stop offset="0" stop-color="#262626"/><stop offset="1" stop-color="#e8e8e8"/></linearGradient></defs>
<rect x="13.5" y="506" width="19.5" height="16" fill="url(#gr)" stroke="#e6e6e6" stroke-width="1.2"/>
<!-- smudge -->
<path d="M18 555 C16 550 17 542 23 540 C28 539 32 540 32.5 545 C33 549 30 551 28 552 L22 557 L15.5 557.5 Z" fill="#e0e0e0"/>
<path d="M20.5 553 L27 547.5 M25 550 L31 545" stroke="#535353" stroke-width="1.3"/>
<!-- dodge -->
<circle cx="25" cy="578" r="6" fill="#e0e0e0"/>
<path d="M20.5 583 L13.5 589.5" stroke="#e0e0e0" stroke-width="1.8" stroke-linecap="round"/>
<!-- pen -->
<path d="M14.5 622 L17.5 611 L26.5 606.5 L31 611 L26.5 620 Z" fill="none" stroke="#e0e0e0" stroke-width="1.3" stroke-linejoin="round"/>
<path d="M26.5 605 L29 602.5 L33.5 607 L31 609.5Z" fill="#e0e0e0"/>
<path d="M14.5 622 L21.5 615" stroke="#e0e0e0" stroke-width="1.1"/>
<circle cx="22.3" cy="614.2" r="1.3" fill="#e0e0e0"/>
<!-- type -->
<path d="M15.5 638.5 V636 H31 V638.5 M23.25 636 V653.5 M19.5 653.5 H27" fill="none" stroke="#e0e0e0" stroke-width="2.3"/>
<!-- path select -->
<path d="M18.5 669.5 V685 L22 681.5 L25 688 L27.5 686.8 L24.7 680.5 L30 680.5 Z" fill="#111" stroke="#e6e6e6" stroke-width="1.1" stroke-linejoin="round"/>
<!-- rectangle -->
<rect x="13.5" y="701.5" width="19.5" height="16" fill="#6a6a6a" stroke="#e6e6e6" stroke-width="1.3"/>
<!-- hand -->
<path d="M17 752 C14.5 749 13 745.5 13.5 744.5 C14.5 743.5 16 744.5 17.5 746.5 L18 736 C18 734.5 20 734.5 20 736 L20.5 743 L21.2 733.5 C21.3 732 23.3 732 23.3 733.5 L23.7 743 L24.5 734.5 C24.7 733 26.6 733.2 26.5 734.8 L26.5 743 L27.8 737 C28.2 735.6 29.9 735.9 29.7 737.4 L29.5 747 C29.2 751.5 26.5 754 23 754 C20.5 754 18.5 753.5 17 752Z" fill="#e0e0e0"/>
<!-- zoom -->
<circle cx="21" cy="772.5" r="6.3" fill="none" stroke="#e0e0e0" stroke-width="1.4"/>
<path d="M25.5 777 L31 782.5" stroke="#e0e0e0" stroke-width="2" stroke-linecap="round"/>
<!-- dots -->
<g fill="#e0e0e0"><circle cx="15.5" cy="808.5" r="2.2"/><circle cx="23" cy="808.5" r="2.2"/><circle cx="30.5" cy="808.5" r="2.2"/></g>
<!-- small fg/bg -->
<rect x="8" y="835" width="9.5" height="9.5" fill="#fff" stroke="#cfcfcf" stroke-width="1.2"/>
<rect x="9.2" y="836.2" width="7.1" height="7.1" fill="none" stroke="#222" stroke-width="0.9"/>
<rect x="4" y="830.5" width="9" height="9" fill="#000" stroke="#cfcfcf" stroke-width="1.2"/>
<path d="M29 835.5 L34 831 L34 840Z" fill="#dcdcdc"/>
<path d="M33 835.5 C37 835.5 39 837 39 840.5" fill="none" stroke="#dcdcdc" stroke-width="2"/>
<path d="M35.2 840 L42.8 840 L39 844.8Z" fill="#dcdcdc"/>
<!-- fg bg -->
<rect x="17.5" y="863.5" width="23" height="23" fill="#fff" stroke="#2a2a2a" stroke-width="1"/>
<rect x="5.5" y="851.5" width="22" height="22" fill="#2d3235" stroke="#f0f0f0" stroke-width="1.3"/>
<rect x="4.5" y="850.5" width="24" height="24" fill="none" stroke="#262626" stroke-width="0.8"/>
<!-- quick mask -->
<rect x="12.5" y="901" width="21" height="16" fill="none" stroke="#e0e0e0" stroke-width="1.2"/>
<circle cx="23" cy="909" r="4.8" fill="none" stroke="#e0e0e0" stroke-width="1.1" stroke-dasharray="1 1.5"/>
<!-- screen mode -->
<rect x="12.5" y="939" width="14" height="11" fill="#535353" stroke="#e0e0e0" stroke-width="1.2"/>
<rect x="18.5" y="934.5" width="14" height="11" fill="#535353" stroke="#e0e0e0" stroke-width="1.2"/>
</svg>

<!-- right dock -->
<div class="a" style="left:2168px;top:74px;width:391px;height:14px;background:#424242"></div>
<svg style="left:2200px;top:78px" width="8" height="6" viewBox="0 0 8 6"><path d="M3.5 0.5 L1 3 L3.5 5.5 M7.5 0.5 L5 3 L7.5 5.5" fill="none" stroke="#e0e0e0" stroke-width="1.2"/></svg>
<svg style="left:2544px;top:78px" width="8" height="6" viewBox="0 0 8 6"><path d="M0.5 0.5 L3 3 L0.5 5.5 M4.5 0.5 L7 3 L4.5 5.5" fill="none" stroke="#e0e0e0" stroke-width="1.2"/></svg>
<!-- icon column -->
<div class="a" style="left:2168px;top:89px;width:47px;height:85px;background:#535353"></div>
<div class="a" style="left:2168px;top:175px;width:47px;height:85px;background:#535353"></div>
<div class="a" style="left:2168px;top:261px;width:47px;height:86px;background:#535353"></div>
<div class="a" style="left:2169px;top:348px;width:46px;height:1042px;background:#535353"></div>
<div class="a grip" style="left:2179px;top:93px"></div>
<div class="a grip" style="left:2179px;top:180px"></div>
<div class="a grip" style="left:2179px;top:266px"></div>
<svg style="left:2168px;top:89px" width="47" height="260" viewBox="2168 89 47 260">
<g fill="none" stroke="#e0e0e0" stroke-width="1.3"><rect x="2182.5" y="107.5" width="5" height="5"/><rect x="2182.5" y="114.5" width="5" height="5"/></g>
<rect x="2182" y="121.5" width="6" height="6.5" fill="#e0e0e0"/>
<path d="M2191 108.5 L2198 108 L2195.5 114 Z" fill="#e0e0e0"/>
<path d="M2195 111 C2200 113 2201 121 2193 126" fill="none" stroke="#e0e0e0" stroke-width="1.8"/>
<path d="M2181 145 Q2181 143 2183 143 L2198 143 Q2200 143 2200 145 L2200 155 Q2200 157 2198 157 L2190 157 L2184 162 L2185 157 L2183 157 Q2181 157 2181 155 Z" fill="#e0e0e0"/>
<!-- brush settings -->
<g fill="#e0e0e0"><rect x="2178" y="193" width="2.5" height="2.5"/><rect x="2178" y="197" width="2.5" height="2.5"/><rect x="2178" y="201" width="2.5" height="2.5"/><rect x="2182" y="193.5" width="5" height="1.3"/><rect x="2182" y="197.5" width="5" height="1.3"/><rect x="2182" y="201.5" width="5" height="1.3"/></g>
<path d="M2204 197 L2194 207" stroke="#e0e0e0" stroke-width="3" stroke-linecap="round"/>
<path d="M2191 206.5 C2187 207.5 2185 211 2183 214 C2188 214 2192 212 2193.5 209 Z" fill="#e0e0e0"/>
<!-- adjustments sliders -->
<path d="M2177 232.5 C2180 229 2186 229 2188 231 C2189 233 2188 235 2186 236 C2182 236 2179 234 2177 232.5Z" fill="#e0e0e0"/>
<rect x="2190" y="231.5" width="12.5" height="3" rx="1.5" fill="#e0e0e0"/>
<rect x="2180" y="241.5" width="12" height="3" rx="1.5" fill="#e0e0e0"/>
<path d="M2203 237 C2205 241 2205 246 2203 250 C2199 248 2196 245 2195 243 C2196 240 2199 238 2203 237Z" fill="#e0e0e0"/>
<!-- character -->
<path d="M2182.5 296.5 L2188.5 280.5 L2190.5 280.5 L2196.5 296.5 M2185 290 H2194" fill="none" stroke="#e0e0e0" stroke-width="1.7"/>
<path d="M2199 279 V297" stroke="#e0e0e0" stroke-width="1"/>
<!-- paragraph -->
<path d="M2193 316 H2190 C2186 316 2184 318 2184 321 C2184 324 2186 326 2190 326 L2192 326 V335 Z" fill="#e0e0e0"/>
<path d="M2193.5 316 H2198 M2193.8 316 V335 M2197.5 316 V335" stroke="#e0e0e0" stroke-width="1.6"/>
</svg>
<!-- main panels bg -->
<div class="a" style="left:2218px;top:89px;width:341px;height:431px;background:#535353"></div>
<div class="a" style="left:2218px;top:523px;width:341px;height:433px;background:#535353"></div>
<div class="a" style="left:2218px;top:959px;width:341px;height:431px;background:#535353"></div>
<!-- Navigator tabs -->
<div class="a" style="left:2298px;top:89px;width:261px;height:35px;background:#424242"></div>
<div class="a psep" style="left:2341px;top:89px"></div>
<div class="a psep" style="left:2383px;top:89px"></div>
<div class="a psep" style="left:2426px;top:89px"></div>
<div class="a psep" style="left:2468px;top:89px"></div>
<div class="a psep" style="left:2515px;top:89px"></div>
<div class="t ptab act" style="left:2230px;top:99px">Navigator</div>
<div class="a" style="left:2309px;top:99px;width:32px;height:14px;overflow:hidden"><div class="t ptab" style="left:0;top:0">Color</div></div>
<div class="a" style="left:2352px;top:99px;width:31px;height:14px;overflow:hidden"><div class="t ptab" style="left:0;top:0">Swatches</div></div>
<div class="a" style="left:2395px;top:99px;width:31px;height:14px;overflow:hidden"><div class="t ptab" style="left:0;top:0">Gradients</div></div>
<div class="a" style="left:2438px;top:99px;width:30px;height:14px;overflow:hidden"><div class="t ptab" style="left:0;top:0">Patterns</div></div>
<div class="a" style="left:2480px;top:99px;width:35px;height:16px;overflow:hidden"><div class="t ptab" style="left:0;top:0">Histogram</div></div>
<div class="a pmenu" style="left:2543px;top:101px"></div>
<!-- navigator thumbnail -->
<div class="a" style="left:2283px;top:130px;width:209px;height:353px;background:#3c3c3c"></div>
<div class="a" style="left:2284px;top:131px;width:207px;height:351px;background:#8b2f2a;border:2px solid #ef4747"></div>
<div class="a" style="left:2286px;top:202px;width:43px;height:278px;background:#ffffff"></div>
<div class="a" style="left:2218px;top:488px;width:341px;height:1px;background:#474747"></div>
<div class="a" style="left:2218px;top:489px;width:72px;height:31px;background:#474747"></div>
<div class="t" style="left:2224px;top:498px;font-size:13px;color:#ececec">25%</div>
<svg style="left:2297px;top:502px" width="13" height="7" viewBox="0 0 13 7"><path d="M0 6.5 L4 2.5 L6 3.5 L8 0.5 L12.5 6.5 Z" fill="#dcdcdc"/></svg>
<div class="a" style="left:2328px;top:500px;width:166px;height:3px;background:#707070"></div>
<svg style="left:2386px;top:501px" width="14" height="15" viewBox="0 0 14 15"><path d="M7 0.7 L13 8 L13 12 Q13 14 11 14 L3 14 Q1 14 1 12 L1 8 Z" fill="#e6e6e6" stroke="#333" stroke-width="0.8"/></svg>
<svg style="left:2506px;top:498px" width="22" height="10" viewBox="0 0 22 10"><path d="M0 9.5 L6 3.5 L9 5 L13.5 0.5 L21.5 9.5 Z" fill="#dcdcdc"/></svg>
<!-- Properties -->
<div class="a" style="left:2300px;top:523px;width:259px;height:34px;background:#424242"></div>
<div class="a psep" style="left:2395px;top:523px;height:34px"></div>
<div class="a psep" style="left:2467px;top:523px;height:34px"></div>
<div class="t ptab act" style="left:2230px;top:533px">Properties</div>
<div class="t ptab" style="left:2311px;top:533px;transform:scaleX(0.98);transform-origin:left">Adjustments</div>
<div class="t ptab" style="left:2407px;top:533px;transform:scaleX(0.94);transform-origin:left">Libraries</div>
<div class="a pmenu" style="left:2543px;top:536px"></div>
<div class="a" style="left:2232px;top:566px;width:27px;height:27px;background:#363636;border-radius:3px"></div>
<svg style="left:2237px;top:572px" width="18" height="16" viewBox="0 0 18 16"><rect x="0.5" y="0.5" width="17" height="15" fill="#e0e0e0"/><rect x="2" y="2" width="14" height="12" fill="#363636"/><path d="M2 14 L2 9 L4 9 L4 7 L6 7 L6 5 L8 5 L8 7 L10 7 L10 9 L12 9 L12 8 L14 8 L14 10 L16 10 L16 14 Z" fill="#e0e0e0"/><rect x="12" y="3.5" width="2.5" height="2.5" fill="#e0e0e0"/></svg>
<div class="t" style="left:2267px;top:574px;font-size:12.5px;color:#e6e6e6">Pixel Layer</div>
<div class="a" style="left:2218px;top:599px;width:341px;height:1px;background:#454545"></div>
<!-- properties scrollbar -->
<div class="a" style="left:2539px;top:600px;width:20px;height:323px;background:#4b4b4b"></div>
<div class="a" style="left:2542px;top:622px;width:14px;height:205px;background:#6a6a6a"></div>
<svg style="left:2545px;top:611px" width="10" height="6" viewBox="0 0 10 6"><path d="M0.5 5.5 L5 1 L9.5 5.5" fill="none" stroke="#9a9a9a" stroke-width="1"/></svg>
<svg style="left:2545px;top:908px" width="10" height="6" viewBox="0 0 10 6"><path d="M0.5 0.5 L5 5 L9.5 0.5" fill="none" stroke="#9a9a9a" stroke-width="1"/></svg>
<!-- transform -->
<svg class="chev" style="left:2227px;top:616px" width="11" height="7" viewBox="0 0 11 7"><path d="M0.5 0.5 L5.5 5.5 L10.5 0.5"/></svg>
<div class="t phead" style="left:2249px;top:614px">Transform</div>
<div class="t plbl" style="left:2274px;top:642px">W</div>
<div class="a pfield" style="left:2291px;top:638px;width:67px;height:22px"></div>
<div class="t pval" style="left:2297px;top:642px">2475 px</div>
<div class="t plbl" style="left:2382px;top:642px">X</div>
<div class="a pfield" style="left:2395px;top:638px;width:67px;height:22px"></div>
<div class="t pval" style="left:2401px;top:642px">-60 px</div>
<div class="t plbl" style="left:2276px;top:673px">H</div>
<div class="a pfield" style="left:2291px;top:669px;width:67px;height:22px"></div>
<div class="t pval" style="left:2297px;top:673px">4183 px</div>
<div class="t plbl" style="left:2382px;top:673px">Y</div>
<div class="a pfield" style="left:2395px;top:669px;width:67px;height:22px"></div>
<div class="t pval" style="left:2401px;top:673px">0 px</div>
<svg style="left:2239px;top:655px" width="10" height="20" viewBox="0 0 10 20"><rect x="1" y="1" width="8" height="9" rx="4" fill="none" stroke="#9a9a9a" stroke-width="1.4"/><rect x="1" y="9" width="8" height="9" rx="4" fill="none" stroke="#9a9a9a" stroke-width="1.4"/><path d="M5 6 V13" stroke="#9a9a9a" stroke-width="1.4"/></svg>
<svg style="left:2269px;top:709px" width="17" height="13" viewBox="0 0 17 13"><path d="M1 12 H16 M1 12 L12 1" fill="none" stroke="#d0d0d0" stroke-width="1.2"/><path d="M9 5 Q12 8 11 12" fill="none" stroke="#d0d0d0" stroke-width="1.1"/></svg>
<div class="a pfield" style="left:2293px;top:706px;width:67px;height:20px"></div>
<div class="a" style="left:2341px;top:706px;width:1px;height:20px;background:#5a5a5a"></div>
<div class="t pval" style="left:2297px;top:710px">0.00°</div>
<svg style="left:2348px;top:714px" width="8" height="5" viewBox="0 0 8 5"><path d="M0.5 0.5 L4 4 L7.5 0.5" fill="none" stroke="#707070" stroke-width="1"/></svg>
<svg style="left:2400px;top:707px" width="22" height="18" viewBox="0 0 22 18"><path d="M1 1.5 L7 9 L1 16.5 Z" fill="none" stroke="#9a9a9a" stroke-width="1.2"/><path d="M20.5 1.5 L14.5 9 L20.5 16.5 Z" fill="#9a9a9a"/><path d="M10.8 0 V18" stroke="#b0b0b0" stroke-width="1" stroke-dasharray="1.5 1"/></svg>
<svg style="left:2436px;top:706px" width="18" height="20" viewBox="0 0 18 20"><path d="M2 1 L16 1 L9 7 Z" fill="none" stroke="#9a9a9a" stroke-width="1.2"/><path d="M2 19 L16 19 L9 12.5 Z" fill="#9a9a9a"/><path d="M0 9.8 H18" stroke="#b0b0b0" stroke-width="1" stroke-dasharray="1.5 1"/></svg>
<div class="a" style="left:2218px;top:745px;width:321px;height:1px;background:#454545"></div>
<!-- align -->
<svg class="chev" style="left:2227px;top:763px" width="11" height="7" viewBox="0 0 11 7"><path d="M0.5 0.5 L5.5 5.5 L10.5 0.5"/></svg>
<div class="t phead" style="left:2248px;top:760px;font-size:13px">Align and Distribute</div>
<div class="t" style="left:2230px;top:787px;font-size:12.5px;color:#d6d6d6">Align:</div>
<svg style="left:2230px;top:815px" width="240" height="24" viewBox="2230 815 240 24" fill="#9a9a9a">
<rect x="2236" y="817" width="1" height="19"/><rect x="2239" y="820" width="8" height="5"/><rect x="2239" y="828" width="12.5" height="5"/>
<rect x="2279.5" y="817" width="1" height="19"/><rect x="2276" y="820" width="8" height="5"/><rect x="2273" y="828" width="14" height="5"/>
<rect x="2323.5" y="817" width="1" height="19"/><rect x="2313" y="820" width="9" height="5"/><rect x="2308" y="828" width="14" height="5"/>
<rect x="2365" y="817" width="18" height="1"/><rect x="2368" y="820" width="5" height="14"/><rect x="2376" y="820" width="5" height="9"/>
<rect x="2401" y="826" width="18" height="1"/><rect x="2404" y="820" width="5" height="14"/><rect x="2411.5" y="823" width="5" height="8"/>
<rect x="2437" y="834.5" width="18" height="1"/><rect x="2440" y="818" width="5" height="15"/><rect x="2448" y="823" width="5" height="10"/>
</svg>
<g></g>
<svg style="left:2438px;top:861px" width="20" height="6" viewBox="0 0 20 6" fill="#e0e0e0"><circle cx="3.5" cy="3" r="1.9"/><circle cx="10" cy="3" r="1.9"/><circle cx="16.5" cy="3" r="1.9"/></svg>
<div class="a" style="left:2218px;top:882px;width:321px;height:1px;background:#454545"></div>
<svg class="chev" style="left:2227px;top:898px" width="11" height="7" viewBox="0 0 11 7"><path d="M0.5 0.5 L5.5 5.5 L10.5 0.5"/></svg>
<div class="t phead" style="left:2248px;top:895px">Quick Actions</div>
<!-- Layers -->
<div class="a" style="left:2277px;top:959px;width:282px;height:34px;background:#424242"></div>
<div class="a psep" style="left:2351px;top:959px;height:34px"></div>
<div class="a psep" style="left:2406px;top:959px;height:34px"></div>
<div class="t ptab act" style="left:2230px;top:969px;transform:scaleX(0.93);transform-origin:left">Layers</div>
<div class="t ptab" style="left:2288px;top:969px;transform:scaleX(0.94);transform-origin:left">Channels</div>
<div class="t ptab" style="left:2363px;top:969px;transform:scaleX(0.95);transform-origin:left">Paths</div>
<div class="a pmenu" style="left:2543px;top:972px"></div>
<div class="a" style="left:2223px;top:1005px;width:108px;height:26px;background:#474747;border:1px solid #404040;border-radius:3px"></div>
<svg style="left:2233px;top:1012px" width="12" height="12" viewBox="0 0 12 12"><circle cx="4.8" cy="4.8" r="3.8" fill="none" stroke="#e0e0e0" stroke-width="1.5"/><path d="M7.5 7.5 L11 11" stroke="#e0e0e0" stroke-width="2"/></svg>
<div class="t" style="left:2250px;top:1013px;font-size:13px;color:#ececec;transform:scaleX(0.92);transform-origin:left">Kind</div>
<svg style="left:2317px;top:1018px" width="8" height="5" viewBox="0 0 8 5"><path d="M0.5 0.5 L4 4 L7.5 0.5" fill="none" stroke="#d0d0d0" stroke-width="1"/></svg>
<svg style="left:2340px;top:1003px" width="175" height="26" viewBox="2340 1003 175 26">
<rect x="2347.5" y="1010.5" width="14" height="12" fill="none" stroke="#dcdcdc" stroke-width="1.2"/><path d="M2349.5 1020.5 L2352 1016 L2354 1018 L2356 1014.5 L2359.5 1020.5Z" fill="#dcdcdc"/>
<circle cx="2383.5" cy="1015.5" r="6" fill="none" stroke="#dcdcdc" stroke-width="1.3"/><path d="M2387.7 1011.3 A6 6 0 0 1 2379.3 1019.7Z" fill="#dcdcdc"/><path d="M2387.7 1011.3 L2379.3 1019.7" stroke="#dcdcdc" stroke-width="1"/>
<path d="M2408.5 1012.5 V1010.5 H2420 V1012.5 M2414.25 1010.5 V1022 M2411.5 1022 H2417" fill="none" stroke="#dcdcdc" stroke-width="1.8"/>
<rect x="2439" y="1011" width="11" height="10.5" fill="none" stroke="#dcdcdc" stroke-width="1.2"/><g fill="#dcdcdc"><rect x="2437.5" y="1009.5" width="3" height="3"/><rect x="2448.5" y="1009.5" width="3" height="3"/><rect x="2437.5" y="1020" width="3" height="3"/><rect x="2448.5" y="1020" width="3" height="3"/></g>
<path d="M2472.5 1009.5 H2478 L2481.5 1013 V1021.5 H2472.5Z" fill="none" stroke="#dcdcdc" stroke-width="1.1"/><rect x="2468" y="1015.5" width="7" height="7" fill="#dcdcdc"/>
<rect x="2496" y="1005" width="10" height="21" rx="5" fill="#3a3a3a"/><circle cx="2501" cy="1010" r="5" fill="#e6e6e6"/>
</svg>
<div class="a" style="left:2218px;top:1032px;width:341px;height:1px;background:#454545"></div>
<div class="a" style="left:2223px;top:1041px;width:160px;height:25px;background:#4f4f4f;border:1px solid #494949;border-radius:3px"></div>
<div class="t" style="left:2233px;top:1048px;font-size:13px;color:#8c8c8c;transform:scaleX(0.95);transform-origin:left">Normal</div>
<svg style="left:2371px;top:1053px" width="8" height="5" viewBox="0 0 8 5"><path d="M0.5 0.5 L4 4 L7.5 0.5" fill="none" stroke="#777" stroke-width="1"/></svg>
<div class="t" style="left:2392px;top:1046px;font-size:12.5px;color:#8c8c8c;transform:scaleX(0.97);transform-origin:left">Opacity:</div>
<div class="a" style="left:2444px;top:1041px;width:62px;height:20px;border:1px solid #4c4c4c;border-radius:2px"></div>
<div class="a" style="left:2445px;top:1042px;width:42px;height:18px;background:#474747"></div>
<div class="t" style="left:2448px;top:1045px;font-size:12.5px;color:#767676">100%</div>
<svg style="left:2493px;top:1050px" width="8" height="5" viewBox="0 0 8 5"><path d="M0.5 0.5 L4 4 L7.5 0.5" fill="none" stroke="#707070" stroke-width="1"/></svg>
<div class="a" style="left:2218px;top:1067px;width:341px;height:1px;background:#454545"></div>
<div class="t" style="left:2226px;top:1081px;font-size:12.5px;color:#dcdcdc;transform:scaleX(0.95);transform-origin:left">Lock:</div>
<svg style="left:2265px;top:1076px" width="130" height="22" viewBox="2265 1076 130 22">
<rect x="2267.5" y="1079.5" width="13" height="13" fill="none" stroke="#dcdcdc" stroke-width="1.2"/><g fill="#dcdcdc"><rect x="2268" y="1080" width="4" height="4"/><rect x="2276" y="1080" width="4" height="4"/><rect x="2272" y="1084" width="4" height="4"/><rect x="2268" y="1088" width="4" height="4"/><rect x="2276" y="1088" width="4" height="4"/></g>
<path d="M2309 1078.5 L2300 1088" stroke="#dcdcdc" stroke-width="2.6" stroke-linecap="round"/><path d="M2298 1087.5 C2295.5 1088.5 2294.5 1092 2293.5 1095 C2297 1095 2300 1093 2300.5 1090 Z" fill="#dcdcdc"/>
<path d="M2320.5 1086 H2335.5 M2328 1078.5 V1093.5" stroke="#dcdcdc" stroke-width="1.3"/><path d="M2328 1077.5 L2325.5 1080.5 H2330.5Z M2328 1094.5 L2325.5 1091.5 H2330.5Z M2319.5 1086 L2322.5 1083.5 V1088.5Z M2336.5 1086 L2333.5 1083.5 V1088.5Z" fill="#dcdcdc"/>
<path d="M2349.5 1080.5 H2358 L2361 1083.5 V1091.5 H2349.5Z" fill="none" stroke="#dcdcdc" stroke-width="1.2"/><path d="M2347 1080.5 H2349.5 M2349.5 1078 V1080.5 M2349.5 1091.5 V1094 M2361 1091.5 H2364 M2361 1091.5 V1094 M2360 1078 L2362 1080" stroke="#dcdcdc" stroke-width="1"/>
<path d="M2380.5 1084 V1081.5 A3.5 3.5 0 0 1 2387.5 1081.5 V1084" fill="none" stroke="#dcdcdc" stroke-width="1.6"/><rect x="2378" y="1084" width="12" height="9.5" rx="1" fill="#dcdcdc"/><circle cx="2384" cy="1088.5" r="1.3" fill="#535353"/>
</svg>
<div class="t" style="left:2419px;top:1081px;font-size:12.5px;color:#8c8c8c">Fill:</div>
<div class="a" style="left:2444px;top:1076px;width:62px;height:20px;border:1px solid #4c4c4c;border-radius:2px"></div>
<div class="a" style="left:2445px;top:1077px;width:42px;height:18px;background:#474747"></div>
<div class="t" style="left:2448px;top:1080px;font-size:12.5px;color:#767676">100%</div>
<svg style="left:2493px;top:1085px" width="8" height="5" viewBox="0 0 8 5"><path d="M0.5 0.5 L4 4 L7.5 0.5" fill="none" stroke="#707070" stroke-width="1"/></svg>
<!-- layer list -->
<div class="a" style="left:2218px;top:1106px;width:321px;height:251px;overflow:hidden;background:#535353">
 <div class="a" style="left:37px;top:0;width:1px;height:251px;background:#484848"></div>
 <div class="a lrow" style="top:34px"></div>
 <div class="a lrow" style="top:65px"></div>
 <div class="a lrow" style="top:96px"></div>
 <div class="a lrow" style="top:148px"></div>
 <div class="a lrow" style="top:199px"></div>
 <div class="a" style="left:39px;top:149px;width:282px;height:50px;background:#6b6b6b"></div>
 <div class="a ebox" style="left:11px;top:3px"></div>
 <div class="a ebox" style="left:11px;top:44px"></div>
 <div class="a ebox" style="left:11px;top:75px"></div>
 <div class="a ebox" style="left:11px;top:116px"></div>
 <div class="a ebox" style="left:11px;top:167px"></div>
 <!-- layer1 thumb -->
 <div class="a" style="left:42px;top:1px;width:25px;height:29px;border:1px solid #333;background:repeating-conic-gradient(#cccccc 0 25%,#ffffff 0 50%) 0 0/8px 8px"></div>
 <div class="a" style="left:43px;top:2px;width:5px;height:27px;background:#000"></div>
 <div class="t lname" style="left:80px;top:6px;transform:scaleX(0.95);transform-origin:left">Layer 1</div>
 <svg style="left:45px;top:47px" width="5" height="10" viewBox="0 0 5 10"><path d="M0.5 0.5 L4.5 5 L0.5 9.5" fill="none" stroke="#dcdcdc" stroke-width="1"/></svg>
 <svg style="left:57px;top:44px" width="19" height="14" viewBox="0 0 19 14"><path d="M0 2 H6 L7 1 V3 H19 V14 H0Z" fill="#e0e0e0"/><rect x="0" y="0" width="9" height="1.3" fill="#b8b8b8"/></svg>
 <div class="t lname" style="left:91px;top:47px">Group 1 copy</div>
 <svg style="left:45px;top:78px" width="5" height="10" viewBox="0 0 5 10"><path d="M0.5 0.5 L4.5 5 L0.5 9.5" fill="none" stroke="#dcdcdc" stroke-width="1"/></svg>
 <svg style="left:57px;top:75px" width="19" height="14" viewBox="0 0 19 14"><path d="M0 2 H6 L7 1 V3 H19 V14 H0Z" fill="#e0e0e0"/><rect x="0" y="0" width="9" height="1.3" fill="#b8b8b8"/></svg>
 <div class="t lname" style="left:91px;top:78px;transform:scaleX(0.96);transform-origin:left">Group 1</div>
 <div class="a" style="left:42px;top:104px;width:25px;height:40px;background:#6c6b66;border:1px solid #2a2a2a"></div>
 <svg style="left:43px;top:105px" width="23" height="38" viewBox="0 0 23 38"><rect x="5.8" y="20.0" width="1" height="1" fill="#55554f"/><rect x="19.3" y="17.6" width="1" height="1" fill="#9a9a94"/><rect x="2.3" y="1.5" width="1" height="1" fill="#55554f"/><rect x="6.2" y="9.2" width="1" height="1" fill="#9a9a94"/><rect x="10.4" y="30.3" width="1" height="1" fill="#55554f"/><rect x="8.9" y="31.1" width="1" height="1" fill="#8a8a84"/><rect x="13.7" y="31.4" width="1" height="1" fill="#9a9a94"/><rect x="8.8" y="1.5" width="1" height="1" fill="#8a8a84"/><rect x="4.2" y="34.5" width="1" height="1" fill="#8a8a84"/><rect x="7.0" y="2.1" width="1" height="1" fill="#55554f"/><rect x="10.5" y="26.2" width="1" height="1" fill="#55554f"/><rect x="15.3" y="33.2" width="1" height="1" fill="#55554f"/><rect x="15.6" y="21.2" width="1" height="1" fill="#8a8a84"/><rect x="18.6" y="4.4" width="1" height="1" fill="#8a8a84"/><rect x="10.9" y="10.0" width="1" height="1" fill="#9a9a94"/><rect x="9.7" y="22.9" width="1" height="1" fill="#55554f"/><rect x="9.4" y="30.2" width="1" height="1" fill="#9a9a94"/><rect x="8.0" y="21.5" width="1" height="1" fill="#9a9a94"/><rect x="5.6" y="12.8" width="1" height="1" fill="#8a8a84"/><rect x="18.1" y="35.7" width="1" height="1" fill="#9a9a94"/><rect x="14.9" y="25.5" width="1" height="1" fill="#55554f"/><rect x="20.3" y="32.7" width="1" height="1" fill="#9a9a94"/><rect x="3.1" y="23.9" width="1" height="1" fill="#9a9a94"/><rect x="17.6" y="21.1" width="1" height="1" fill="#55554f"/><rect x="3.5" y="17.9" width="1" height="1" fill="#9a9a94"/><rect x="20.8" y="4.1" width="1" height="1" fill="#8a8a84"/><rect x="9.2" y="6.3" width="1" height="1" fill="#55554f"/><rect x="9.5" y="15.5" width="1" height="1" fill="#8a8a84"/><rect x="1.9" y="22.5" width="1" height="1" fill="#8a8a84"/><rect x="8.6" y="21.5" width="1" height="1" fill="#9a9a94"/><rect x="18.6" y="35.3" width="1" height="1" fill="#9a9a94"/><rect x="5.7" y="2.3" width="1" height="1" fill="#8a8a84"/><rect x="2.5" y="22.0" width="1" height="1" fill="#8a8a84"/><rect x="20.0" y="35.0" width="1" height="1" fill="#55554f"/><rect x="13.2" y="6.5" width="1" height="1" fill="#8a8a84"/><rect x="20.6" y="12.9" width="1" height="1" fill="#55554f"/><rect x="20.2" y="32.4" width="1" height="1" fill="#55554f"/><rect x="8.5" y="31.4" width="1" height="1" fill="#55554f"/><rect x="13.9" y="21.8" width="1" height="1" fill="#9a9a94"/><rect x="3.1" y="35.1" width="1" height="1" fill="#9a9a94"/><rect x="1" y="10" width="1" height="2" fill="#d0d0d0"/><rect x="1" y="16" width="1" height="2" fill="#d0d0d0"/><rect x="1" y="26" width="1" height="2" fill="#d0d0d0"/></svg>
 <div class="t lname" style="left:80px;top:119px;transform:scaleX(0.95);transform-origin:left">Layer 2</div>
 <div class="a" style="left:40px;top:153px;width:30px;height:45px;border:2px solid #f0f0f0"></div>
 <div class="a" style="left:42px;top:155px;width:26px;height:41px;background:#686862;border:1px solid #222"></div>
 <div class="a" style="left:46px;top:160px;width:1px;height:34px;background:#b9c3d0"></div>
 <svg style="left:43px;top:156px" width="24" height="39" viewBox="0 0 24 39"><rect x="6.7" y="23.8" width="1" height="1" fill="#a0a09a"/><rect x="6.0" y="11.8" width="1" height="1" fill="#45453f"/><rect x="11.9" y="20.7" width="1" height="1" fill="#8a8a84"/><rect x="17.6" y="36.5" width="1" height="1" fill="#45453f"/><rect x="1.4" y="23.2" width="1" height="1" fill="#a0a09a"/><rect x="3.8" y="23.8" width="1" height="1" fill="#45453f"/><rect x="10.8" y="25.5" width="1" height="1" fill="#45453f"/><rect x="13.8" y="11.0" width="1" height="1" fill="#45453f"/><rect x="1.5" y="3.2" width="1" height="1" fill="#a0a09a"/><rect x="1.4" y="14.3" width="1" height="1" fill="#a0a09a"/><rect x="10.6" y="22.3" width="1" height="1" fill="#45453f"/><rect x="4.7" y="7.7" width="1" height="1" fill="#45453f"/><rect x="18.7" y="10.5" width="1" height="1" fill="#45453f"/><rect x="3.2" y="30.3" width="1" height="1" fill="#a0a09a"/><rect x="15.4" y="5.7" width="1" height="1" fill="#a0a09a"/><rect x="5.7" y="29.9" width="1" height="1" fill="#8a8a84"/><rect x="7.9" y="25.4" width="1" height="1" fill="#a0a09a"/><rect x="15.7" y="4.7" width="1" height="1" fill="#45453f"/><rect x="20.9" y="25.3" width="1" height="1" fill="#8a8a84"/><rect x="10.2" y="31.8" width="1" height="1" fill="#8a8a84"/><rect x="2.7" y="27.7" width="1" height="1" fill="#8a8a84"/><rect x="19.6" y="17.2" width="1" height="1" fill="#8a8a84"/><rect x="17.5" y="2.2" width="1" height="1" fill="#8a8a84"/><rect x="7.6" y="31.1" width="1" height="1" fill="#a0a09a"/><rect x="4.9" y="11.0" width="1" height="1" fill="#a0a09a"/><rect x="2.8" y="23.3" width="1" height="1" fill="#a0a09a"/><rect x="3.7" y="11.5" width="1" height="1" fill="#45453f"/><rect x="10.8" y="23.8" width="1" height="1" fill="#45453f"/><rect x="9.8" y="15.7" width="1" height="1" fill="#45453f"/><rect x="4.3" y="1.2" width="1" height="1" fill="#a0a09a"/><rect x="0" y="1" width="24" height="1" fill="#8a8a84"/><rect x="2" y="7" width="3" height="1" fill="#d8b060"/><circle cx="12" cy="14" r="0.8" fill="#eee"/><circle cx="15" cy="24" r="0.8" fill="#eee"/><circle cx="9" cy="18" r="0.7" fill="#222"/></svg>
 <div class="t lname" style="left:80px;top:170px;transform:scaleX(0.95);transform-origin:left">Layer 5</div>
 <svg style="left:11px;top:222px" width="16" height="10" viewBox="0 0 16 10"><path d="M0.5 5 C4 -0.5 12 -0.5 15.5 5 C12 10.5 4 10.5 0.5 5Z" fill="#e6e6e6"/><circle cx="8" cy="4.6" r="2.6" fill="#535353"/><circle cx="8.6" cy="3.8" r="0.9" fill="#e6e6e6"/></svg>
 <div class="a" style="left:42px;top:206px;width:25px;height:40px;background:#8b2f2a;border:1px solid #2a2a2a"></div>
 <div class="a" style="left:43px;top:214px;width:5px;height:31px;background:#fff"></div>
 <div class="t lname" style="left:80px;top:221px;font-style:italic">Background</div>
 <svg style="left:288px;top:219px" width="14" height="16" viewBox="0 0 14 16"><path d="M3.5 7 V4.5 A3.5 3.5 0 0 1 10.5 4.5 V7" fill="none" stroke="#dcdcdc" stroke-width="1.2"/><rect x="1" y="7" width="12" height="8.5" rx="1" fill="none" stroke="#dcdcdc" stroke-width="1.2"/><circle cx="7" cy="11" r="1.2" fill="#dcdcdc"/></svg>
</div>
<div class="a" style="left:2539px;top:1106px;width:20px;height:251px;background:#4b4b4b"></div>
<div class="a" style="left:2542px;top:1192px;width:14px;height:145px;background:#6a6a6a;border-radius:2px"></div>
<svg style="left:2545px;top:1116px" width="10" height="6" viewBox="0 0 10 6"><path d="M0.5 5.5 L5 1 L9.5 5.5" fill="none" stroke="#9a9a9a" stroke-width="1"/></svg>
<svg style="left:2545px;top:1342px" width="10" height="6" viewBox="0 0 10 6"><path d="M0.5 0.5 L5 5 L9.5 0.5" fill="none" stroke="#9a9a9a" stroke-width="1"/></svg>
<div class="a" style="left:2218px;top:1357px;width:341px;height:1px;background:#454545"></div>
<svg style="left:2300px;top:1362px" width="230" height="24" viewBox="2300 1362 230 24">
<g fill="none" stroke="#9a9a9a" stroke-width="1.6"><path d="M2311 1370.3 H2309.5 A4.2 4.2 0 0 0 2309.5 1378.7 H2311 M2317 1370.3 H2318.5 A4.2 4.2 0 0 1 2318.5 1378.7 H2317"/><path d="M2309.5 1374.5 H2318.5"/></g>
<text x="2341" y="1380" font-family="Liberation Serif" font-style="italic" font-size="17" fill="#dcdcdc">fx</text>
<path d="M2357 1382 L2361 1382 L2359 1384.5Z M2423 1382 L2427 1382 L2425 1384.5Z" fill="#dcdcdc"/>
<rect x="2374" y="1368" width="16" height="12" rx="1" fill="#dcdcdc"/><circle cx="2382" cy="1374" r="3.3" fill="#535353"/>
<circle cx="2416" cy="1374" r="6.3" fill="none" stroke="#dcdcdc" stroke-width="1.3"/><path d="M2420.5 1369.5 A6.3 6.3 0 0 1 2411.5 1378.5Z" fill="#dcdcdc"/>
<path d="M2442 1368.5 H2449 V1370 H2457.5 V1380 H2442Z" fill="#dcdcdc"/>
<rect x="2476.5" y="1367.5" width="13.5" height="13.5" fill="none" stroke="#dcdcdc" stroke-width="1.2"/><path d="M2483.25 1370.5 V1378 M2479.5 1374.25 H2487" stroke="#dcdcdc" stroke-width="1.4"/>
<path d="M2509 1369.5 H2524 M2513.5 1369.5 V1367.5 H2519.5 V1369.5" fill="none" stroke="#dcdcdc" stroke-width="1.3"/><path d="M2510.5 1371 H2522.5 V1381 H2510.5Z" fill="none" stroke="#dcdcdc" stroke-width="1.3"/><path d="M2514 1372.5 V1379.5 M2516.5 1372.5 V1379.5 M2519 1372.5 V1379.5" stroke="#dcdcdc" stroke-width="1"/>
</svg>

<!-- taskbar -->
<div class="a" style="left:0;top:1390px;width:2560px;height:50px;background:linear-gradient(90deg,#1f3742 0%,#1f3541 25%,#1d2f40 50%,#1c2a42 75%,#1b2643 100%)"></div>
<svg style="left:20px;top:1405px" width="21" height="20" viewBox="0 0 21 20"><path d="M0 2.7 L8.3 1.6 V9.4 H0Z M9.3 1.5 L21 0 V9.4 H9.3Z M0 10.4 H8.3 V18.3 L0 17.2Z M9.3 10.4 H21 V20 L9.3 18.5Z" fill="#ffffff"/></svg>
<div class="a" style="left:60px;top:1390px;width:360px;height:50px;background:#f2f2f2;border-top:1px solid #c4c4c4;border-bottom:1px solid #c4c4c4"></div>
<svg style="left:75px;top:1405px" width="21" height="21" viewBox="0 0 21 21"><circle cx="13" cy="8" r="6.5" fill="none" stroke="#1a1a1a" stroke-width="1.6"/><path d="M8.3 12.7 L1 20" stroke="#1a1a1a" stroke-width="1.7"/></svg>
<div class="t" style="left:110px;top:1405px;font-size:19px;color:#1e1e1e;letter-spacing:-0.2px">Type here to search</div>
<svg style="left:310px;top:1390px" width="110" height="50" viewBox="0 0 110 50">
<defs><linearGradient id="sand" x1="0" x2="1"><stop offset="0" stop-color="#f2d2b0"/><stop offset="1" stop-color="#c8925e"/></linearGradient>
<linearGradient id="sea" x1="0" y1="0" x2="1" y2="1"><stop offset="0" stop-color="#12d0c8"/><stop offset="0.5" stop-color="#1ab0c8"/><stop offset="1" stop-color="#c8f6f6"/></linearGradient>
<linearGradient id="hill" x1="0" x2="1"><stop offset="0" stop-color="#8a9a30"/><stop offset="1" stop-color="#4a7a20"/></linearGradient></defs>
<path d="M77 30 C85 20 98 18 110 21 V31 Z" fill="url(#hill)"/>
<path d="M10 50 C40 46 80 44 96 36 C100 33 104 31 110 31 V50 Z" fill="url(#sand)"/>
<path d="M10 49 C16 43 20 40 21 36 C23 31 35 30 50 29.5 C65 29 80 29 90 31 C98 33 98 38 92 42 C80 46 50 47 10 49 Z" fill="url(#sea)"/>
<path d="M36 37 C45 35 55 33 72 32" fill="none" stroke="#e8ffff" stroke-width="1.5" opacity="0.8"/>
<g fill="#3a8a2a"><path d="M88 21 L86 14 M88 15 C85 12 82 13 81 15 C84 14 86 15 88 16Z M88 15 C90 12 93 13 94 15 C91 14 89 15 88 16Z"/><path d="M95 19 L94 10 M94 11 C91 8 88 9 87 11 C90 10 92 11 94 12Z M94 11 C97 8 100 9 101 11 C98 10 96 11 94 12Z M94 11 C93 8 94 6 95 5 C95 8 95 10 94 12Z"/></g>
<path d="M87 21 L87.5 14 M94 19 L94.5 10" stroke="#5a5040" stroke-width="0.8"/>
<path d="M22 14.5 C22 12 25 11 26 12.5 C27 9 32 9 33 12 C35 11 37 12 37 13.5 C39 13 41 13.5 41 14.5 Z" fill="#ecc4a4"/>
<path d="M22 14.5 H41" stroke="#a8b8e0" stroke-width="0.8"/>
<path d="M39 20.5 C39 18 41.5 17 43 18 C44 15 47 15 48 17 C49 12 56 11 58 14 C59 12 63 12.5 64 15 C67 15 69 17 69 20.5 Z" fill="#ecc4a4"/>
<path d="M39 20.5 H69" stroke="#a8b8e0" stroke-width="1"/>
</svg>
<!-- task view -->
<svg style="left:430px;top:1398px" width="34" height="30" viewBox="0 0 34 30"><g fill="none" stroke="#fff" stroke-width="1.3"><path d="M10.6 7 V10.4 H22.4 V7"/><rect x="10.6" y="12.6" width="11.8" height="7.8"/><path d="M10.6 26 V22.6 H22.4 V26"/><path d="M28.5 7 V12 M28.5 17 V26"/></g><rect x="26.8" y="13" width="3.4" height="3.4" fill="#fff"/></svg>
<!-- explorer -->
<svg style="left:500px;top:1403px" width="28" height="23" viewBox="0 0 28 23"><path d="M0 2 Q0 0 2 0 L9 0 L11 2 H26 Q28 2 28 4 V21 Q28 23 26 23 H2 Q0 23 0 21Z" fill="#f4c542"/><path d="M0 5 H28 V21 Q28 23 26 23 H2 Q0 23 0 21Z" fill="#fbd568"/><path d="M6 23 V13 Q6 11 8 11 H20 Q22 11 22 13 V23 H18 V15 H10 V23Z" fill="#3b8fe0"/></svg>
<!-- store -->
<svg style="left:561px;top:1401px" width="29" height="29" viewBox="0 0 29 29"><path d="M8 6 V2 Q8 0.5 9.5 0.5 H19.5 Q21 0.5 21 2 V6" fill="none" stroke="#2ea8f0" stroke-width="1.8"/><rect x="0" y="5" width="29" height="24" rx="3" fill="#f4f4f4"/><rect x="9" y="11" width="5" height="5" fill="#f25022"/><rect x="15" y="11" width="5" height="5" fill="#7fba00"/><rect x="9" y="17" width="5" height="5" fill="#00a4ef"/><rect x="15" y="17" width="5" height="5" fill="#ffb900"/></svg>
<!-- firefox -->
<svg style="left:623px;top:1400px" width="30" height="30" viewBox="0 0 30 30"><defs><radialGradient id="ff" cx="0.7" cy="0.2" r="1"><stop offset="0" stop-color="#ffe34a"/><stop offset="0.45" stop-color="#ff8a1f"/><stop offset="1" stop-color="#e3206b"/></radialGradient></defs><path d="M15 29 C7 29 1 23 1 15.5 C1 10 4 6 6 4.5 C6 7 7 8 8 9 C9 5 12 3 14 2 C13 4 14 6 16 6.5 C22 6 28 10 28.5 17 C29 23.5 23 29 15 29Z" fill="url(#ff)"/><circle cx="15" cy="16" r="6.5" fill="#7b3fc9"/><path d="M8 13 C10 10 16 9 19 11 C15 11 12 13 11 16Z" fill="#ff9a2a"/></svg>
<!-- globe -->
<svg style="left:685px;top:1400px" width="30" height="31" viewBox="0 0 30 31"><circle cx="15" cy="15" r="14" fill="#000080" stroke="#000" stroke-width="1.2"/><path d="M5 8 L8 5 L14 4 L19 5 L19 7 L15 8 L15 10 L12 11 L11 13 L13 14 L16 16 L16 19 L14 21 L13 24 L14 26 L12 26 L10 21 L9 17 L6 15 L5 12 Z M23 5 L26 7 L26 10 L24 9 Z M26 15 L28 17 L27 22 L25 24 L24 21 Z" fill="#ffff00"/><rect x="11" y="27" width="8" height="2.5" fill="#ffff00"/></svg>
<!-- airplane -->
<svg style="left:746px;top:1400px" width="33" height="32" viewBox="0 0 33 32"><path d="M15 1 L17 1 L17.5 4 L14.5 4Z" fill="#e8e020"/><rect x="14" y="4" width="4" height="24" fill="#0e8a8a"/><path d="M1 10 Q1 8 4 8 L29 8 Q31 9 31 11 L29 13 L21 14 L11 14 L3 13 Q1 12 1 10Z" fill="#0e8a8a"/><path d="M10 23 H22 L21 26 H11Z" fill="#0e8a8a"/><circle cx="6" cy="10.5" r="1.8" fill="#fff"/><circle cx="6" cy="10.5" r="1" fill="#e02020"/><rect x="15" y="11" width="2" height="5" fill="#e8f0f0"/><path d="M20 17 L23 20 L31 29 L29 31 L21 22 Z" fill="#f0e020" stroke="#222" stroke-width="0.6"/><path d="M19.5 16.5 L22 19 L20.5 20.5Z" fill="#fff" stroke="#111" stroke-width="0.5"/></svg>
<!-- snip -->
<svg style="left:809px;top:1400px" width="32" height="31" viewBox="0 0 32 31"><ellipse cx="14.5" cy="14.5" rx="12.5" ry="7" transform="rotate(-22 14.5 14.5)" fill="#9aa0a6" stroke="#d04040" stroke-width="0.8"/><ellipse cx="16" cy="10.5" rx="12" ry="6.5" transform="rotate(-22 16 10.5)" fill="#f2f2f2" stroke="#e03a3a" stroke-width="1.2"/><path d="M13 4 L16 16 M5 11 L18 16" stroke="#9a9a9a" stroke-width="1.4"/><path d="M18 16 C23 13 29 16 28 20 C27 23 22 22 19 18 M18 16 C17 22 19 29 23 29 C26 29 25 23 19 18" fill="none" stroke="#2a90e0" stroke-width="1.8"/></svg>
<!-- ps active -->
<div class="a" style="left:856px;top:1390px;width:61px;height:47px;background:#45555d"></div>
<div class="a" style="left:872px;top:1401px;width:27px;height:26px;background:#001e36;border-radius:4px"></div>
<div class="t" style="left:876px;top:1406px;font-size:16px;font-weight:bold;color:#31a8ff">Ps</div>
<!-- discord -->
<svg style="left:933px;top:1400px" width="32" height="32" viewBox="0 0 32 32"><circle cx="15" cy="15" r="14.5" fill="#5865f2"/><path d="M8 11 Q11 8 13 9 L17 9 Q19 8 22 11 Q24 15 23 20 Q21 22 19 22 L18 20 Q15 21 12 20 L11 22 Q9 22 7 20 Q6 15 8 11Z" fill="#fff"/><circle cx="12" cy="15" r="1.8" fill="#5865f2"/><circle cx="18" cy="15" r="1.8" fill="#5865f2"/><circle cx="22" cy="22" r="8" fill="#e34a4a"/><text x="15.5" y="26.5" font-family="Liberation Sans" font-size="11" fill="#fff">9+</text></svg>
<!-- whatsapp -->
<svg style="left:995px;top:1400px" width="38" height="35" viewBox="0 0 38 35"><circle cx="15" cy="14" r="12.5" fill="none" stroke="#25d366" stroke-width="3"/><path d="M3 28 L5 20 L9 25Z" fill="#25d366"/><path d="M10 9 Q11 8 12 9 L13 12 L12 13 Q14 17 17 18 L18 17 L21 18 Q22 19 21 20 Q19 22 15 20 Q10 17 9 12Z" fill="#25d366"/><circle cx="29" cy="24" r="10" fill="#2b2b2b" stroke="#777" stroke-width="0.8"/><text x="22" y="29.5" font-family="Liberation Serif" font-size="14" fill="#fff">33</text></svg>
<!-- qgis -->
<svg style="left:1057px;top:1401px" width="30" height="30" viewBox="0 0 30 30"><circle cx="14" cy="14" r="11" fill="none" stroke="#93b023" stroke-width="5"/><path d="M14 14 L27 28" stroke="#589632" stroke-width="4"/><path d="M12 11 L16 11 L18 15" fill="#ee7913"/></svg>
<!-- person search -->
<svg style="left:1119px;top:1400px" width="30" height="32" viewBox="0 0 30 32"><circle cx="10" cy="9" r="7" fill="#1a1a1a"/><circle cx="11" cy="11" r="5" fill="#e06a20"/><path d="M2 27 Q3 18 11 18 Q17 18 18 24 L16 28Z" fill="#2a60d0"/><circle cx="21" cy="13" r="6.5" fill="#cfe8f8" stroke="#9ab" stroke-width="1.2"/><path d="M17 18 L11 28" stroke="#e09020" stroke-width="2.5"/></svg>
<!-- calculator -->
<svg style="left:1183px;top:1400px" width="24" height="30" viewBox="0 0 24 30"><rect x="0" y="0" width="23" height="30" rx="2" fill="#5a6670"/><rect x="3" y="3" width="17" height="5" fill="#3ccdf0"/><g fill="#e0e6ea"><rect x="3" y="11" width="4.5" height="4"/><rect x="9.3" y="11" width="4.5" height="4"/><rect x="15.5" y="11" width="4.5" height="4"/><rect x="3" y="17" width="4.5" height="4"/><rect x="9.3" y="17" width="4.5" height="4"/><rect x="3" y="23" width="4.5" height="4"/><rect x="9.3" y="23" width="4.5" height="4"/></g><rect x="15.5" y="17" width="4.5" height="10" fill="#1a4a8a"/></svg>
<!-- blue bug -->
<svg style="left:1247px;top:1401px" width="16" height="30" viewBox="0 0 16 30"><path d="M5 1 L7 5 L9 1 L10 5 Q14 12 13 18 Q12 24 8 25 L7 29 L5 25 Q2 22 3 16 Q4 10 6 6Z" fill="#4a4af0"/></svg>
<!-- GE Pro -->
<svg style="left:1305px;top:1400px" width="30" height="30" viewBox="0 0 30 30"><circle cx="14.5" cy="14" r="13.5" fill="#e6e6ea"/><path d="M2 9 Q14 5 27 12 L27 16 Q14 9 2 13Z M3 19 Q15 14 26 22 L24 25 Q14 18 4 23Z" fill="#9a9aa6"/><rect x="6" y="22" width="17" height="7" rx="3" fill="#222"/><text x="8" y="28" font-family="Liberation Sans" font-size="7" fill="#ddd">Pro</text></svg>
<!-- media player -->
<svg style="left:1368px;top:1403px" width="25" height="25" viewBox="0 0 25 25"><rect x="4" y="1" width="20" height="23" fill="#9fc8e8"/><rect x="0" y="0" width="20" height="23" fill="#b8dcf4"/><circle cx="10" cy="11.5" r="8" fill="#f07a20"/><path d="M7.5 7 L14.5 11.5 L7.5 16Z" fill="#fff"/></svg>
<!-- photos -->
<svg style="left:1430px;top:1402px" width="27" height="27" viewBox="0 0 27 27"><defs><linearGradient id="ph" x1="0" y1="0" x2="1" y2="1"><stop offset="0" stop-color="#2a8af0"/><stop offset="1" stop-color="#8a5ad8"/></linearGradient></defs><rect x="0" y="0" width="26" height="26" rx="4" fill="url(#ph)"/><path d="M0 24 L10 10 L17 17 L26 26 H2Z" fill="#38c8f0"/><path d="M5 26 L14 16 L26 24 V26Z" fill="#1a90e0"/><circle cx="19" cy="5" r="2.3" fill="#fff"/></svg>
<!-- sketchup -->
<svg style="left:1490px;top:1400px" width="31" height="31" viewBox="0 0 31 31"><rect x="0" y="0" width="30" height="30" fill="#e8eef4"/><path d="M8 9 L15 5 L23 9 L23 20 L15 25 L11 23 M8 9 L8 14 L15 18 L15 13 L8 9 M11 16 L11 21 M15 13 L19 11" fill="none" stroke="#1a5a9a" stroke-width="2.2"/></svg>
<!-- underlines -->
<div class="ul" style="left:489px;width:40px"></div><div class="ul" style="left:530px;width:10px;background:#5a8ab8"></div>
<div class="ul" style="left:551px;width:51px"></div>
<div class="ul" style="left:613px;width:51px"></div>
<div class="ul" style="left:856px;width:61px"></div>
<div class="ul" style="left:923px;width:51px"></div>
<div class="ul" style="left:985px;width:51px"></div>
<div class="ul" style="left:1047px;width:51px"></div>
<div class="ul" style="left:1109px;width:51px"></div>
<div class="ul" style="left:1171px;width:51px"></div>
<div class="ul" style="left:1233px;width:51px"></div>
<div class="ul" style="left:1295px;width:51px"></div>
<div class="ul" style="left:1357px;width:51px"></div>
<div class="ul" style="left:1419px;width:40px"></div><div class="ul" style="left:1460px;width:10px;background:#5a8ab8"></div>
<div class="ul" style="left:1481px;width:40px"></div><div class="ul" style="left:1522px;width:10px;background:#5a8ab8"></div>
<!-- tray -->
<svg style="left:2056px;top:1398px" width="34" height="34" viewBox="0 0 34 34"><defs><linearGradient id="moon" x1="0" y1="0" x2="0" y2="1"><stop offset="0" stop-color="#e8b040"/><stop offset="0.5" stop-color="#f0b828"/><stop offset="1" stop-color="#f07818"/></linearGradient><linearGradient id="cl" x1="0" y1="0" x2="0" y2="1"><stop offset="0" stop-color="#a8c8f4"/><stop offset="1" stop-color="#dce8f8"/></linearGradient></defs><path d="M21 6 C28 8 32 14 31 21 C30 29 22 33 15 32 C10 31 6 27 5 23 C12 25 19 22 22 15 C23 12 23 9 21 6Z" fill="url(#moon)"/><path d="M3 15 C2 12 4 10 6 10.5 C7 7 10 5 13 6 C15 6.5 17 8 17.5 10 C19.5 10 20.5 12 20 14 C20 15.5 19 16.5 17.5 16.5 H5 C3.5 16.5 3 15.5 3 15Z" fill="url(#cl)"/><path d="M15 31 C13.5 30.5 13.5 28 15.5 27.5 C16 24 19 22 22 23 C24 23.5 25 25 25.5 26 C28 25.5 30 27 30 29 C30 30.5 29 31.5 27.5 31.5 H16.5 C15.5 31.5 15 31.3 15 31Z" fill="url(#cl)"/></svg>
<div class="t" style="left:2098px;top:1407px;font-size:18px;color:#ffffff">11°C</div>
<div class="t" style="left:2146px;top:1407px;font-size:18.6px;color:#ffffff;direction:rtl;unicode-bidi:bidi-override;width:96px;text-align:left"><span style="unicode-bidi:normal;direction:rtl">מעונן חלקית</span></div>
<svg style="left:2273px;top:1410px" width="18" height="10" viewBox="0 0 18 10"><path d="M1 9 L9 1 L17 9" fill="none" stroke="#fff" stroke-width="1.3"/></svg>
<svg style="left:2302px;top:1406px" width="21" height="18" viewBox="0 0 21 18"><rect x="3.5" y="2.5" width="17" height="11" fill="none" stroke="#fff" stroke-width="1.1"/><path d="M12 13.5 V16.5 M8 17 H16" stroke="#fff" stroke-width="1.1"/><rect x="0.5" y="0.5" width="4" height="6" fill="#1b2a42" stroke="#fff" stroke-width="1"/><path d="M2.5 6.5 V17" stroke="#fff" stroke-width="1"/></svg>
<svg style="left:2332px;top:1406px" width="21" height="18" viewBox="0 0 21 18"><path d="M0.5 6 H4 L9 1.5 V16.5 L4 12 H0.5Z" fill="none" stroke="#fff" stroke-width="1.1"/><path d="M12 6.5 Q13.5 9 12 11.5" fill="none" stroke="#fff" stroke-width="1.1"/><path d="M15 4 Q18 9 15 14 M18 1.5 Q22 9 18 16.5" fill="none" stroke="#8a96a8" stroke-width="1.1"/></svg>
<div class="t" style="left:2365px;top:1408px;font-size:15px;color:#ffffff;transform:scaleX(0.91);transform-origin:left">ENG</div>
<div class="t" style="left:2434px;top:1397px;font-size:15px;color:#ffffff;transform:scaleX(0.93);transform-origin:left">2:08</div>
<div class="t" style="left:2410px;top:1420px;font-size:15px;color:#ffffff;letter-spacing:-0.3px;transform:scaleX(1.05);transform-origin:left">06/04/2024</div>
<svg style="left:2509px;top:1405px" width="36" height="32" viewBox="0 0 36 32"><path d="M0.5 0.5 H19.5 V16 H4 L0.5 19Z" fill="#fff"/><path d="M4 5 H16 M4 8.5 H16 M4 12 H12" stroke="#1b2643" stroke-width="1.2"/><circle cx="20" cy="19" r="11.5" fill="#2b2f38" stroke="#6a6f78" stroke-width="1"/><text x="12.3" y="24.5" font-family="Liberation Sans" font-size="15" fill="#fff">23</text></svg>
<div class="a" style="left:2554px;top:1390px;width:1px;height:50px;background:#5a6070"></div>

</body></html>
